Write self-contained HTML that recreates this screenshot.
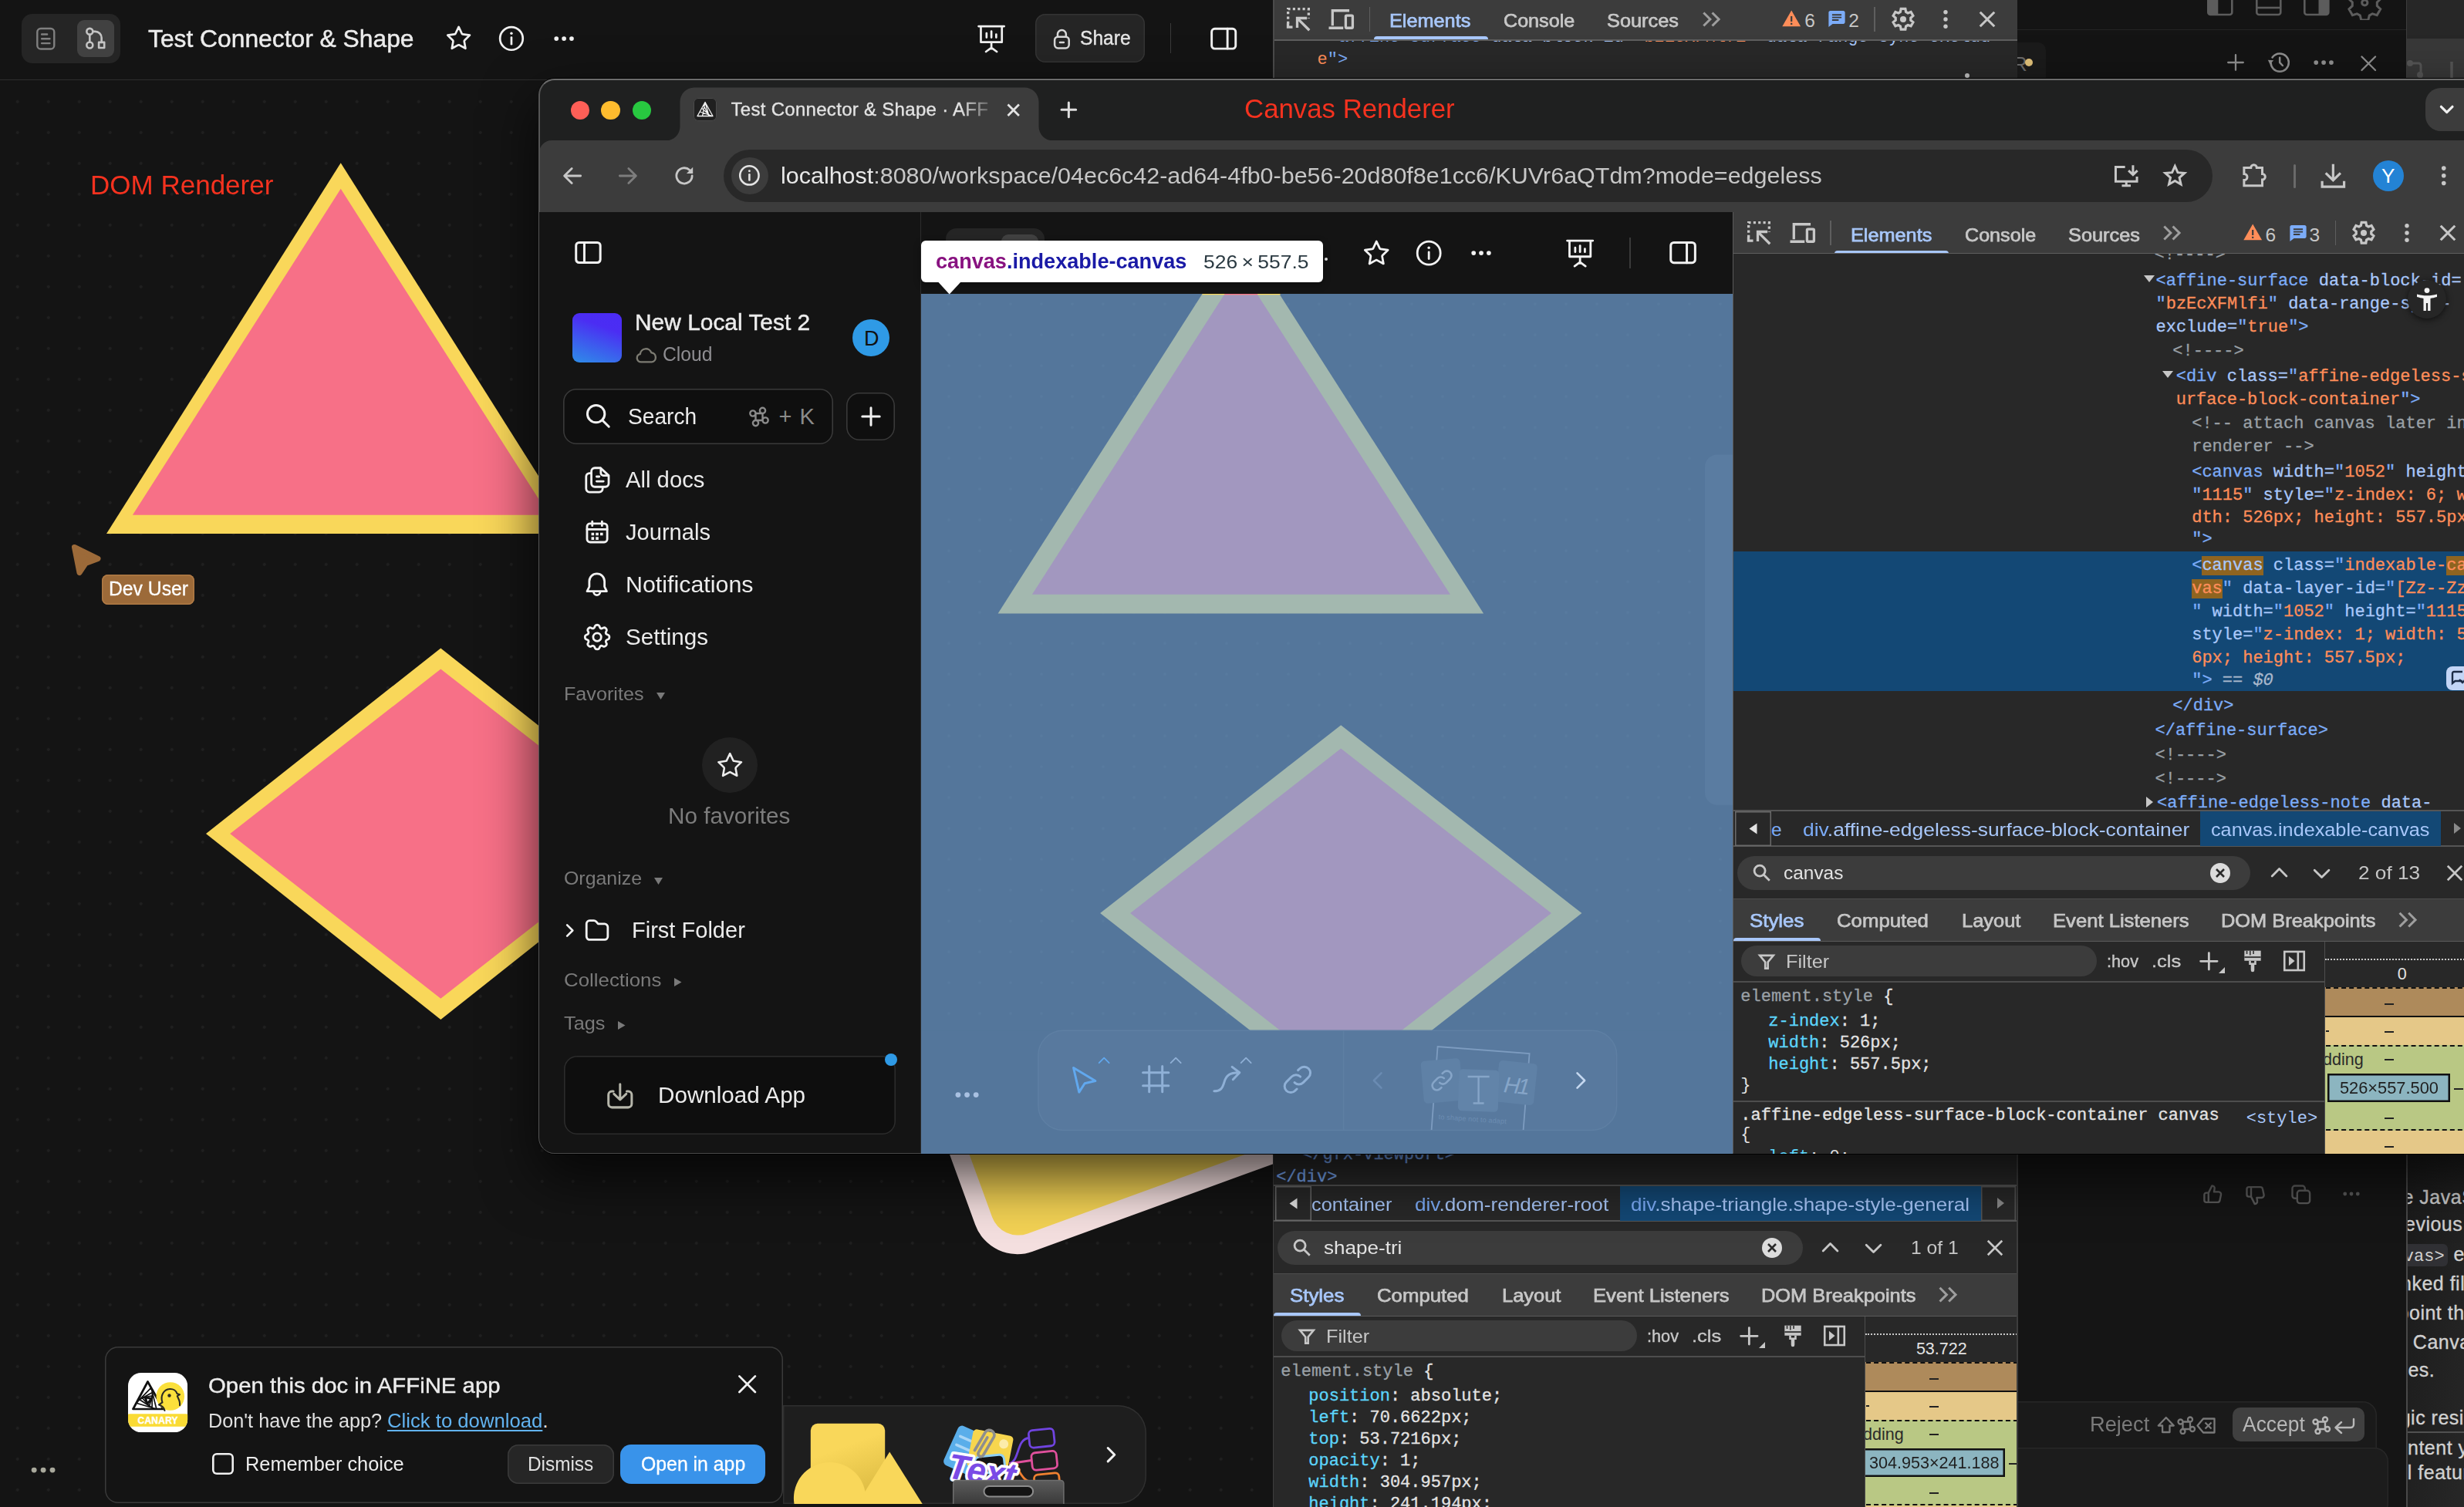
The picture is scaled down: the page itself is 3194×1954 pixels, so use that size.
<!DOCTYPE html>
<html><head><meta charset="utf-8"><title>Canvas vs DOM Renderer</title>
<style>
html,body{margin:0;padding:0;background:#141414;}
body{width:3194px;height:1954px;position:relative;overflow:hidden;font-family:"Liberation Sans",sans-serif;}
.b{position:absolute;box-sizing:border-box;display:block;}
.t{position:absolute;white-space:pre;}
svg text{white-space:pre;}
</style></head><body>
<div class="b" style="left:0px;top:103px;width:1651px;height:1851px;background-color:#141414;background-image:radial-gradient(circle,#202020 1.5px,rgba(32,32,32,0) 2.3px);background-size:40px 40px;background-position:2.7px -111.2px;"></div>
<svg class="b" style="left:0;top:103px" width="700" height="1400" viewBox="0 103 700 1400"><polygon points="441.7,211.3 138,692 745.4,692" fill="#f9d75a"/><polygon points="441.7,244.8 171.9,667.8 711.5,667.8" fill="#f77087"/><polygon points="571.3,840.4 267,1081 571.3,1322 875.6,1081" fill="#f9d75a"/><polygon points="571.3,867.4 298.2,1081 571.3,1294.7 844.4,1081" fill="#f77087"/></svg>
<div class="t" style="left:117px;top:222.2px;font:35px/35px 'Liberation Sans',sans-serif;color:#f5321f;transform:scaleX(1.0004);transform-origin:0 0;">DOM Renderer</div>
<svg class="b" style="left:88px;top:700px" width="48" height="50" viewBox="88 700 48 50"><path d="M96.5 709.5 L127 724.5 L111 730.5 L103 742.5 Z" fill="#9c6a39" stroke="#9c6a39" stroke-width="7" stroke-linejoin="round"/></svg>
<div class="b" style="left:132.4px;top:745.2px;width:119.3px;height:38.6px;background:#9c6a39;border-radius:8px;box-shadow:inset 0 0 0 1.5px #b07a45;"></div>
<div class="t" style="left:140.7px;top:750.7px;font:25.5px/25.5px 'Liberation Sans',sans-serif;color:#fff;transform:scaleX(0.9701);transform-origin:0 0;-webkit-text-stroke:0.3px;">Dev User</div>
<div class="b" style="left:0px;top:0px;width:1651px;height:103.5px;background:#141414;border-bottom:1.5px solid #2e2e2e;"></div>
<div class="b" style="left:28px;top:18px;width:128px;height:64px;background:#252525;border-radius:14px;"></div>
<div class="b" style="left:100px;top:26px;width:48px;height:48px;background:#414141;border-radius:9px;"></div>
<svg class="b" style="left:41.4px;top:31.7px;overflow:visible;" width="36.6" height="36.6" viewBox="0 0 24 24"><rect fill="none" stroke="#808080" stroke-width="1.572" stroke-linecap="round" stroke-linejoin="round" x="4.8" y="3.3" width="14.4" height="17.4" rx="3"/><path fill="none" stroke="#808080" stroke-width="1.572" stroke-linecap="round" stroke-linejoin="round" d="M8.6 8.2h4.6M8.6 12h6.8M8.6 15.8h6.8"/></svg>
<svg class="b" style="left:106.3px;top:32.3px;overflow:visible;" width="35.4" height="35.4" viewBox="0 0 24 24"><circle fill="none" stroke="#c4c4c4" stroke-width="1.764" stroke-linecap="round" stroke-linejoin="round" cx="7" cy="6" r="2.7"/><circle fill="none" stroke="#c4c4c4" stroke-width="1.764" stroke-linecap="round" stroke-linejoin="round" cx="7" cy="18" r="2.7"/><rect fill="none" stroke="#c4c4c4" stroke-width="1.764" stroke-linecap="round" stroke-linejoin="round" x="15" y="15.5" width="4.8" height="4.8"/><path fill="none" stroke="#c4c4c4" stroke-width="1.764" stroke-linecap="round" stroke-linejoin="round" d="M7 8.7v6.6M9.7 6h2.1a5.6 5.6 0 015.6 5.6v3.9"/></svg>
<div class="t" style="left:191.5px;top:34.7px;font:31px/31px 'Liberation Sans',sans-serif;color:#ececec;transform:scaleX(1.0252);transform-origin:0 0;-webkit-text-stroke:0.45px;">Test Connector &amp; Shape</div>
<svg class="b" style="left:575.4px;top:29.2px;overflow:visible;" width="39.2" height="39.2" viewBox="0 0 24 24"><path fill="none" stroke="#f0f0f0" stroke-width="1.655" stroke-linecap="round" stroke-linejoin="round" d="M12 3.6l2.5 5.3c.1.3.4.5.7.5l5.6.8-4.1 4c-.2.2-.3.6-.3.9l1 5.6-5-2.7c-.3-.1-.6-.1-.8 0l-5 2.7 1-5.6c0-.3-.1-.7-.3-.9l-4.1-4 5.6-.8c.3 0 .6-.2.7-.5z"/></svg>
<svg class="b" style="left:642.8px;top:30px;overflow:visible;" width="39.9" height="39.9" viewBox="0 0 24 24"><circle fill="none" stroke="#f0f0f0" stroke-width="1.623" stroke-linecap="round" stroke-linejoin="round" cx="12" cy="12" r="8.9"/><path fill="none" stroke="#f0f0f0" stroke-width="1.623" stroke-linecap="round" stroke-linejoin="round" d="M12 11.2v5.2"/><circle cx="12" cy="7.9" r="1.05" fill="#f0f0f0"/></svg>
<svg class="b" style="left:711.6px;top:30.9px;overflow:visible;" width="38.2" height="38.2" viewBox="0 0 24 24"><circle cx="5.8" cy="12" r="1.8" fill="#f0f0f0"/><circle cx="12" cy="12" r="1.8" fill="#f0f0f0"/><circle cx="18.2" cy="12" r="1.8" fill="#f0f0f0"/></svg>
<svg class="b" style="left:1263.4px;top:28.4px;overflow:visible;" width="44.2" height="44.2" viewBox="0 0 24 24"><path fill="none" stroke="#f0f0f0" stroke-width="1.466" stroke-linecap="round" stroke-linejoin="round" d="M3 3.3h18M4.6 3.3v11.2h14.8V3.3M12 14.5v4.6M12 18.4l-3.8 2.8M12 18.4l3.8 2.8M8.6 8.2v3M12 6.8v4.4M15.4 9v2.2"/></svg>
<div class="b" style="left:1342px;top:18px;width:142px;height:63px;background:#252525;border-radius:13px;box-shadow:inset 0 0 0 1.5px #343434;"></div>
<svg class="b" style="left:1359.6px;top:33.6px;overflow:visible;" width="32.8" height="32.8" viewBox="0 0 24 24"><rect fill="none" stroke="#d8d8d8" stroke-width="1.827" stroke-linecap="round" stroke-linejoin="round" x="5.2" y="10" width="13.6" height="10.8" rx="3.2"/><path fill="none" stroke="#d8d8d8" stroke-width="1.827" stroke-linecap="round" stroke-linejoin="round" d="M8 10V7.6a4 4 0 018 0V10M10.2 15.4h3.6"/></svg>
<div class="t" style="left:1400px;top:36.4px;font:26.5px/26.5px 'Liberation Sans',sans-serif;color:#e6e6e6;transform:scaleX(0.9276);transform-origin:0 0;-webkit-text-stroke:0.4px;">Share</div>
<div class="b" style="left:1516.5px;top:30px;width:1.5px;height:39px;background:#3a3a3a;"></div>
<svg class="b" style="left:1564.6px;top:28.6px;overflow:visible;" width="42.4" height="42.4" viewBox="0 0 24 24"><rect fill="none" stroke="#f0f0f0" stroke-width="1.64" stroke-linecap="round" stroke-linejoin="round" x="3.2" y="4.7" width="17.6" height="14.6" rx="2.2"/><path fill="none" stroke="#f0f0f0" stroke-width="1.64" stroke-linecap="round" stroke-linejoin="round" d="M14.8 4.7v14.6"/></svg>
<svg class="b" style="left:32.9px;top:1883.1px;overflow:visible;" width="46.2" height="46.2" viewBox="0 0 24 24"><circle cx="5.8" cy="12" r="1.8" fill="#a9a99c"/><circle cx="12" cy="12" r="1.8" fill="#a9a99c"/><circle cx="18.2" cy="12" r="1.8" fill="#a9a99c"/></svg>
<svg class="b" style="left:1200px;top:1490px" width="460" height="160" viewBox="1200 1490 460 160"><defs><linearGradient id="gy" x1="0" y1="0" x2="0" y2="1"><stop offset="0" stop-color="#f3d254"/><stop offset="1" stop-color="#f3d254"/></linearGradient></defs><g transform="rotate(-20 1284 1642.5)"><rect x="1284" y="1242.5" width="700" height="400" rx="58" fill="#f4dfdf"/><rect x="1308" y="1266.5" width="652" height="352" rx="36" fill="#f3d254"/></g></svg>
<div class="b" style="left:1014.5px;top:1822.3px;width:471.7px;height:128px;background:#1e1e1e;border-radius:0 36px 36px 0;box-shadow:inset 0 0 0 1.5px #2f2f2f;"></div>
<svg class="b" style="left:1020px;top:1830px" width="460" height="120" viewBox="1020 1830 460 120"><defs><linearGradient id="gsq" x1="0" y1="0" x2="0.300" y2="1"><stop offset="0.350" stop-color="#f9d75a"/><stop offset="1" stop-color="#d9b840"/></linearGradient><linearGradient id="gbx" x1="0" y1="0" x2="0" y2="1"><stop offset="0" stop-color="#5c5c5c"/><stop offset="1" stop-color="#2f2f2f"/></linearGradient></defs><rect x="1050.8" y="1845.8" width="96.4" height="120" rx="9" fill="url(#gsq)"/><circle cx="1075.6" cy="1942.6" r="46.7" fill="#f9d75a"/><polygon points="1153.2,1882.6 1111,1950.5 1196,1950.5" fill="#f9d75a"/><g transform="rotate(24 1250 1880)"><rect x="1231" y="1852" width="42" height="56" rx="6" fill="#5aaeea"/><path d="M1238 1866h26M1238 1878h26M1238 1890h20" stroke="#a9d6f7" stroke-width="3.5" stroke-linecap="round"/></g><g transform="rotate(11 1283 1882)"><rect x="1257" y="1857" width="53" height="50" rx="5" fill="#f7d64e"/><circle cx="1299" cy="1869" r="6" fill="#fcecaa"/></g><path d="M1308 1897.5c14-2 9-32 26-33M1308 1897.5l29-4M1308 1899c14 0 12 22 32 23" fill="none" stroke-width="2.8"/><path d="M1308 1897.5c14-2 9-32 26-33" fill="none" stroke="#7044e0" stroke-width="2.8"/><path d="M1310 1897.5l27-4" fill="none" stroke="#e0509c" stroke-width="2.8"/><path d="M1308 1899c16 0 12 22 32 23" fill="none" stroke="#f08030" stroke-width="2.8"/><rect x="1334" y="1853.5" width="32.5" height="22.5" rx="5" fill="#1e1e1e" stroke="#7044e0" stroke-width="2.8" transform="rotate(-6 1350 1865)"/><rect x="1337.5" y="1882.5" width="32.5" height="22.5" rx="5" fill="#1e1e1e" stroke="#e0509c" stroke-width="2.8" transform="rotate(-6 1354 1894)"/><rect x="1341" y="1911" width="32.5" height="22.5" rx="5" fill="#1e1e1e" stroke="#f08030" stroke-width="2.8" transform="rotate(-6 1357 1922)"/><rect x="1264" y="1887.5" width="38" height="22" rx="6" fill="#141414" stroke="#8fd0f5" stroke-width="3" transform="rotate(-6 1283 1897)"/><text x="1227" y="1916" transform="rotate(9 1227 1916)" font-family="Liberation Sans, sans-serif" font-style="italic" font-weight="bold" font-size="46" fill="#7a4be6" stroke="#fff" stroke-width="7" paint-order="stroke" stroke-linejoin="round" textLength="88" lengthAdjust="spacingAndGlyphs">Text</text><path d="M1263.5 1880.5l14-24a6.5 6.5 0 0111 6.5l-14 24a3.6 3.6 0 01-6.2-3.6l11.5-19.5" fill="none" stroke="#8e8e8e" stroke-width="3.6" stroke-linecap="round"/><rect x="1235.7" y="1919.4" width="143.2" height="40" rx="4" fill="url(#gbx)" stroke="#6e6e6e" stroke-width="1.5"/><rect x="1275.5" y="1927" width="63.6" height="13.4" rx="6.7" fill="#141414" stroke="#8c8c8c" stroke-width="2"/></svg>
<svg class="b" style="left:1423.8px;top:1869.8px;overflow:visible;" width="32.4" height="32.4" viewBox="0 0 24 24"><path fill="none" stroke="#f0f0f0" stroke-width="2.222" stroke-linecap="round" stroke-linejoin="round" d="M9 5.6l6.4 6.4-6.4 6.4"/></svg>
<div class="b" style="left:136px;top:1746px;width:878.5px;height:203px;background:#141414;border-radius:17px;box-shadow:inset 0 0 0 1.5px #3a3a3a;"></div>
<svg class="b" style="left:166.4px;top:1780.4px" width="77.2" height="77.2" viewBox="0 0 77.2 77.2"><defs><clipPath id="cpi"><rect x="0" y="0" width="77.2" height="77.2" rx="17"/></clipPath></defs><g clip-path="url(#cpi)"><rect width="77.2" height="77.2" fill="#fff"/><rect x="-1" y="53.2" width="79.2" height="16.6" rx="3" fill="#fadb35"/><path d="M25.5 11.5L45.5 47L6.5 47ZM29.9 19.3L36.9 47L10.7 39.2ZM31.4 25.4L31.1 45.3L14.9 34.8ZM31.4 29.8L27.6 43L18.5 32.7ZM30.5 32.7L25.6 40.7L21.4 32.1ZM29.5 34.5L24.7 38.8L23.4 32.2Z" fill="none" stroke="#111" stroke-width="1.7" stroke-linejoin="round"/><path d="M25.5 11.5L45.5 47H6.5z" fill="none" stroke="#111" stroke-width="2.7" stroke-linejoin="round"/><circle cx="54.8" cy="30.5" r="18.3" fill="#fbe03c"/><path d="M44.5 38.5c-3-8.5 1.5-17 9.5-17.5 5-.300 8.5 2.5 9.5 6l3.5 1.2-3.2 2c1.5 3.5 4 6.5 3.2 12M44.5 38.5l-4.5 3c3.5 1 6.5 3.5 7.5 7.5" fill="none" stroke="#2b2a22" stroke-width="2.1" stroke-linecap="round" stroke-linejoin="round"/><circle cx="53.5" cy="29.5" r="2.2" fill="#2b2a22"/><text x="38.6" y="66.3" text-anchor="middle" font-family="Liberation Sans, sans-serif" font-weight="bold" font-size="12" fill="#fff" textLength="52" stroke="#fff" stroke-width=".4">CANARY</text></g></svg>
<div class="t" style="left:269.9px;top:1782.3px;font:28.5px/28.5px 'Liberation Sans',sans-serif;color:#ececec;transform:scaleX(1.0301);transform-origin:0 0;-webkit-text-stroke:0.4px;">Open this doc in AFFiNE app</div>
<div class="t" style="left:269.9px;top:1829px;font:26.5px/26.5px 'Liberation Sans',sans-serif;color:#e0e0e0;transform:scaleX(0.9522);transform-origin:0 0;">Don't have the app? </div>
<div class="t" style="left:502px;top:1829px;font:26.5px/26.5px 'Liberation Sans',sans-serif;color:#62b3f0;transform:scaleX(0.9692);transform-origin:0 0;text-decoration:underline;text-decoration-thickness:2px;text-underline-offset:3px;">Click to download</div>
<div class="t" style="left:703.3px;top:1829px;font:26.5px/26.5px 'Liberation Sans',sans-serif;color:#e0e0e0;">.</div>
<svg class="b" style="left:952.2px;top:1778px;overflow:visible;" width="33.3" height="33.3" viewBox="0 0 24 24"><path fill="none" stroke="#f0f0f0" stroke-width="2.018" stroke-linecap="round" stroke-linejoin="round" d="M4.6 4.6l14.8 14.8M19.4 4.6L4.6 19.4"/></svg>
<div class="b" style="left:274.8px;top:1883.8px;width:28.4px;height:28.5px;border-radius:6px;box-shadow:inset 0 0 0 2.6px #f0f0f0;"></div>
<div class="t" style="left:317.8px;top:1885px;font:26.5px/26.5px 'Liberation Sans',sans-serif;color:#ececec;transform:scaleX(0.9566);transform-origin:0 0;">Remember choice</div>
<div class="b" style="left:657.5px;top:1872.5px;width:138px;height:51px;background:#262626;border-radius:14px;box-shadow:inset 0 0 0 1.5px #3a3a3a;"></div>
<div class="t" style="left:683.8px;top:1885px;font:26.5px/26.5px 'Liberation Sans',sans-serif;color:#e0e0e0;transform:scaleX(0.9187);transform-origin:0 0;">Dismiss</div>
<div class="b" style="left:804.4px;top:1872.5px;width:188px;height:51px;background:#3993ea;border-radius:14px;"></div>
<div class="t" style="left:830.8px;top:1885px;font:26.5px/26.5px 'Liberation Sans',sans-serif;color:#fff;transform:scaleX(0.9363);transform-origin:0 0;-webkit-text-stroke:0.3px;">Open in app</div>
<div class="b" style="left:1650px;top:0px;width:965px;height:102px;background:#282828;"></div>
<div class="b" style="left:1652px;top:51px;width:963px;height:51px;overflow:hidden">
<div class="t" style="left:70px;top:-13px;font:22px/22px 'Liberation Mono',monospace;color:#a8c7fa;"><span style="color:#7cacf8">&lt;affine-surface</span> data-block-id=<span style="color:#fe8d59">"bzEcXFMlfi"</span> data-range-sync-exclud</div>
</div>
<div class="t" style="left:1707.5px;top:66.5px;font:22px/22px 'Liberation Mono',monospace;color:#7cacf8;"><span style="color:#fe8d59">e</span>"&gt;</div>
<div class="b" style="left:1650px;top:0px;width:965px;height:51px;background:#3c3c3c;"></div>
<svg class="b" style="left:1664.7px;top:6.5px;overflow:visible;" width="36" height="36" viewBox="0 0 24 24"><path fill="none" stroke="#c7c7c7" stroke-width="2.2" stroke-linecap="butt" stroke-linejoin="miter" stroke-dasharray="2.1 2.15" d="M3.1 16V3.1h17.8v8"/><path fill="none" stroke="#c7c7c7" stroke-width="2.2" stroke-linecap="butt" stroke-linejoin="miter" d="M3 15.5v3.3h4"/><path fill="none" stroke="#c7c7c7" stroke-width="2.2" stroke-linecap="butt" stroke-linejoin="miter" d="M21.5 21.5L11.4 11.4M11 19.4V11h8.4"/></svg>
<svg class="b" style="left:1721.2px;top:6.5px;overflow:visible;" width="36" height="36" viewBox="0 0 24 24"><path fill="none" stroke="#c7c7c7" stroke-width="2.2" stroke-linecap="butt" stroke-linejoin="miter" d="M4.2 17.5V4.5h14.5M1 19.5h12.5"/><rect fill="none" stroke="#c7c7c7" stroke-width="2.2" stroke-linecap="butt" stroke-linejoin="miter" x="15.6" y="8.8" width="6" height="10.7" rx=".8"/></svg>
<div class="b" style="left:1774.7px;top:8.5px;width:1.6px;height:32px;background:#5e5e5e;"></div>
<div class="t" style="left:1801.4px;top:15.2px;font:24.5px/24.5px 'Liberation Sans',sans-serif;color:#a8c7fa;transform:scaleX(1.031);transform-origin:0 0;-webkit-text-stroke:0.75px;">Elements</div>
<div class="t" style="left:1949.3px;top:15.2px;font:24.5px/24.5px 'Liberation Sans',sans-serif;color:#c7c7c7;transform:scaleX(1.0257);transform-origin:0 0;-webkit-text-stroke:0.75px;">Console</div>
<div class="t" style="left:2083.3px;top:15.2px;font:24.5px/24.5px 'Liberation Sans',sans-serif;color:#c7c7c7;transform:scaleX(1.0336);transform-origin:0 0;-webkit-text-stroke:0.75px;">Sources</div>
<svg class="b" style="left:2202.7px;top:8.5px;overflow:visible;" width="32" height="32" viewBox="0 0 24 24"><path fill="none" stroke="#9e9e9e" stroke-width="2.25" stroke-linecap="butt" stroke-linejoin="miter" d="M4 5.6l6.4 6.4L4 18.4M12.4 5.6l6.4 6.4-6.4 6.4"/></svg>
<svg class="b" style="left:2309.4px;top:10.8px;overflow:visible;" width="26.4" height="26.4" viewBox="0 0 24 24"><path d="M12 2.2L1.2 21.2h21.6z" fill="#fe8d59"/><path d="M11 9h2v6.4h-2zM11 17h2v2.2h-2z" fill="#3c3c3c"/></svg>
<div class="t" style="left:2339.2px;top:15.2px;font:24.5px/24.5px 'Liberation Sans',sans-serif;color:#c7c7c7;">6</div>
<svg class="b" style="left:2368.3px;top:11px;overflow:visible;" width="26" height="26" viewBox="0 0 24 24"><path d="M4.2 2.8h15.6c1.1 0 2 .900 2 2v11.6c0 1.1-.900 2-2 2H7l-4.8 3.8V4.8c0-1.1.900-2 2-2z" fill="#7cacf8"/><path d="M6.4 6.8h11.2v1.7H6.4zM6.4 9.9h11.2v1.7H6.4zM6.4 13h7.8v1.7H6.4z" fill="#3c3c3c"/></svg>
<div class="t" style="left:2396.2px;top:15.2px;font:24.5px/24.5px 'Liberation Sans',sans-serif;color:#c7c7c7;">2</div>
<div class="b" style="left:2429.2px;top:8.5px;width:1.6px;height:32px;background:#5e5e5e;"></div>
<svg class="b" style="left:2448.7px;top:6.5px;overflow:visible;" width="36" height="36" viewBox="0 0 24 24"><path fill="none" stroke="#c7c7c7" stroke-width="2.133" stroke-linecap="butt" stroke-linejoin="miter" stroke-linejoin="round" d="M10.1 2.9h3.8l.5 2.7 1.7 1 2.6-.9 1.9 3.3-2.1 1.8v2l2.1 1.8-1.9 3.3-2.6-.9-1.7 1-.5 2.7h-3.8l-.5-2.7-1.7-1-2.6.9-1.9-3.3 2.1-1.8v-2L3.4 9l1.9-3.3 2.6.9 1.7-1z"/><circle cx="12" cy="12" r="2.7" fill="#c7c7c7"/></svg>
<svg class="b" style="left:2504.4px;top:6.5px;overflow:visible;" width="36" height="36" viewBox="0 0 24 24"><circle cy="5.8" cx="12" r="1.8" fill="#c7c7c7"/><circle cx="12" cy="12" r="1.8" fill="#c7c7c7"/><circle cy="18.2" cx="12" r="1.8" fill="#c7c7c7"/></svg>
<svg class="b" style="left:2561.2px;top:9.5px;overflow:visible;" width="30" height="30" viewBox="0 0 24 24"><path fill="none" stroke="#c7c7c7" stroke-width="2.48" stroke-linecap="butt" stroke-linejoin="miter" d="M4.6 4.6l14.8 14.8M19.4 4.6L4.6 19.4"/></svg>
<div class="b" style="left:1780.7px;top:47px;width:148px;height:4px;background:#a8c7fa;border-radius:4px 4px 0 0;"></div>
<div class="b" style="left:1650px;top:51px;width:965px;height:1.6px;background:#5e5e5e;"></div>
<div class="b" style="left:1650px;top:0px;width:2px;height:102px;background:#4a4a4a;"></div>
<div class="b" style="left:2546.7px;top:94.5px;width:6px;height:6px;background:#c0c0c0;border-radius:3px;"></div>
<div class="b" style="left:2615px;top:0px;width:579px;height:102px;background:#141414;"></div>
<div class="b" style="left:2615px;top:37.5px;width:504px;height:1.5px;background:#242424;"></div>
<div class="b" style="left:2615px;top:55px;width:37px;height:47px;background:#1b1b1b;border-radius:0 10px 0 0;"></div>
<div class="b" style="left:2615px;top:55px;width:40px;height:47px;overflow:hidden">
<div class="t" style="left:-6px;top:15px;font:26px/26px 'Liberation Sans',sans-serif;color:#6a6a6a;">R</div>
</div>
<div class="b" style="left:2625px;top:76px;width:10px;height:10px;background:#e2c27a;border-radius:5px;"></div>
<div class="b" style="left:3119px;top:0px;width:75px;height:50px;background:#272727;"></div>
<div class="b" style="left:3119px;top:50px;width:75px;height:52px;background:#383838;"></div>
<div class="b" style="left:3118.5px;top:0px;width:1.5px;height:102px;background:#3d3d3d;"></div>
<svg class="b" style="left:2855px;top:0" width="240" height="26" viewBox="2855 0 240 26"><g fill="none" stroke="#5c5c5c" stroke-width="2.6"><rect x="2862.3" y="-8" width="31" height="27" rx="3"/><rect x="2925.3" y="-8" width="31" height="27" rx="3"/><rect x="2987.3" y="-8" width="31" height="27" rx="3"/><path d="M2925.3 10h31"/></g><path d="M2862.3 -8h13v27h-10a3 3 0 01-3-3z M3005.5 -8h13v24a3 3 0 01-3 3h-10z" fill="#5c5c5c"/><g transform="translate(3065.3 3.5)" fill="none" stroke="#5c5c5c" stroke-width="3" stroke-linejoin="miter"><path d="M-4.5 -19h9l1.5 6 4 2.3 5.9-1.8 4.5 7.8-4.4 4.2v4.6l4.4 4.2-4.5 7.8-5.9-1.8-4 2.3-1.5 6h-9l-1.5-6-4-2.3-5.9 1.8-4.5-7.8 4.4-4.2v-4.6l-4.4-4.2 4.5-7.8 5.9 1.8 4-2.3z"/><circle cx="0" cy="0" r="3.6"/></g></svg>
<svg class="b" style="left:2883.5px;top:67px;overflow:visible;" width="28" height="28" viewBox="0 0 24 24"><path fill="none" stroke="#8f8f8f" stroke-width="1.971" stroke-linecap="round" stroke-linejoin="round" d="M12 3.6v16.8M3.6 12h16.8"/></svg>
<svg class="b" style="left:2937.4px;top:63.9px;overflow:visible;" width="34.1" height="34.1" viewBox="0 0 24 24"><path fill="none" stroke="#8f8f8f" stroke-width="1.759" stroke-linecap="round" stroke-linejoin="round" d="M4.6 12a8.2 8.2 0 108.2-8.2A8.2 8.2 0 006 7.4"/><path fill="none" stroke="#8f8f8f" stroke-width="1.759" stroke-linecap="round" stroke-linejoin="round" d="M12.8 7.6V12l2.6 2.8"/><path d="M2 9.6l5.2.4-3.4 3.6z" fill="#8f8f8f"/></svg>
<svg class="b" style="left:2993.1px;top:62.1px;overflow:visible;" width="38.2" height="38.2" viewBox="0 0 24 24"><circle cx="5.8" cy="12" r="1.8" fill="#8f8f8f"/><circle cx="12" cy="12" r="1.8" fill="#8f8f8f"/><circle cx="18.2" cy="12" r="1.8" fill="#8f8f8f"/></svg>
<svg class="b" style="left:3055.8px;top:67.8px;overflow:visible;" width="28.5" height="28.5" viewBox="0 0 24 24"><path fill="none" stroke="#8f8f8f" stroke-width="1.937" stroke-linecap="round" stroke-linejoin="round" d="M4.6 4.6l14.8 14.8M19.4 4.6L4.6 19.4"/></svg>
<svg class="b" style="left:3120px;top:76px" width="74" height="26" viewBox="3120 76 74 26"><path d="M3121 82h14a3 3 0 013 3v17" fill="none" stroke="#555" stroke-width="3"/><circle cx="3124" cy="82" r="4" fill="#555"/><circle cx="3137" cy="97" r="4" fill="#555"/><path d="M3178 80v22" stroke="#555" stroke-width="3.5"/></svg>
<div class="b" style="left:2616px;top:1495px;width:578px;height:459px;background:#151515;"></div>
<div class="b" style="left:3119.5px;top:1495px;width:75px;height:459px;background:linear-gradient(100deg,#1a1a1a,#272727);"></div>
<div class="b" style="left:3118.8px;top:1495px;width:2px;height:459px;background:#484848;"></div>
<svg class="b" style="left:2853.1px;top:1533px;overflow:visible;" width="30.9" height="30.9" viewBox="0 0 24 24"><path fill="none" stroke="#5b5b5b" stroke-width="1.861" stroke-linecap="round" stroke-linejoin="round" d="M7.6 10.6l3.6-7.2c1.6 0 2.8 1.4 2.5 3l-.5 3.2h4.7c1.5 0 2.6 1.4 2.3 2.8l-1.2 5.8c-.2 1.1-1.2 1.9-2.3 1.9H7.6M7.6 10.6v9.5M7.6 10.6H5.4a2 2 0 00-2 2v5.5a2 2 0 002 2h2.2"/></svg>
<svg class="b" style="left:2907.5px;top:1533.7px;overflow:visible;transform:rotate(180deg) scaleX(-1);" width="31.6" height="31.6" viewBox="0 0 24 24"><path fill="none" stroke="#5b5b5b" stroke-width="1.824" stroke-linecap="round" stroke-linejoin="round" d="M7.6 10.6l3.6-7.2c1.6 0 2.8 1.4 2.5 3l-.5 3.2h4.7c1.5 0 2.6 1.4 2.3 2.8l-1.2 5.8c-.2 1.1-1.2 1.9-2.3 1.9H7.6M7.6 10.6v9.5M7.6 10.6H5.4a2 2 0 00-2 2v5.5a2 2 0 002 2h2.2"/></svg>
<svg class="b" style="left:2967.2px;top:1532.7px;overflow:visible;" width="31.6" height="31.6" viewBox="0 0 24 24"><rect fill="none" stroke="#5b5b5b" stroke-width="1.824" stroke-linecap="round" stroke-linejoin="round" x="8.2" y="8.2" width="12.4" height="12.4" rx="2.6"/><path fill="none" stroke="#5b5b5b" stroke-width="1.824" stroke-linecap="round" stroke-linejoin="round" d="M15.8 8V6a2.6 2.6 0 00-2.6-2.6H6A2.6 2.6 0 003.4 6v7.2A2.6 2.6 0 006 15.8h2"/></svg>
<svg class="b" style="left:3032.4px;top:1532.2px;overflow:visible;" width="32" height="32" viewBox="0 0 24 24"><circle cx="5.8" cy="12" r="1.8" fill="#5b5b5b"/><circle cx="12" cy="12" r="1.8" fill="#5b5b5b"/><circle cx="18.2" cy="12" r="1.8" fill="#5b5b5b"/></svg>
<div class="b" style="left:2596px;top:1816.5px;width:485px;height:90px;background:#1a1a1a;border-radius:18px;box-shadow:inset 0 0 0 1.5px #262626;"></div>
<div class="t" style="left:2709px;top:1833.8px;font:27px/27px 'Liberation Sans',sans-serif;color:#7a7a7a;transform:scaleX(1.0087);transform-origin:0 0;">Reject</div>
<svg class="b" style="left:2796px;top:1836px" width="78" height="24" viewBox="2796 1836 78 24" fill="none" stroke="#7a7a7a" stroke-width="2.3" stroke-linejoin="round"><path d="M2807.8 1838l10 10.5h-5.3v8.5h-9.4v-8.5h-5.3z"/><path d="M2829.5 1843.5h9.5v9.5h-9.5zM2829.5 1843.5a3 3 0 11-3-3 3 3 0 013 3zM2839 1843.5a3 3 0 113 -3 3 3 0 01-3 3zM2839 1853a3 3 0 113 3 3 3 0 01-3-3zM2829.5 1853a3 3 0 11-3 3 3 3 0 013-3z"/><path d="M2856 1839.5h14.5v18H2856l-7.5-9zM2858.5 1844.5l8 8M2866.5 1844.5l-8 8"/></svg>
<div class="b" style="left:2894px;top:1825px;width:170.8px;height:44px;background:#404040;border-radius:10px;"></div>
<div class="t" style="left:2907.2px;top:1833.8px;font:27px/27px 'Liberation Sans',sans-serif;color:#b8b8b8;transform:scaleX(0.9789);transform-origin:0 0;">Accept</div>
<svg class="b" style="left:2996px;top:1836px" width="60" height="24" viewBox="2996 1836 60 24" fill="none" stroke="#b8b8b8" stroke-width="2.4" stroke-linejoin="round"><path d="M3004.5 1843.5h9.5v9.5h-9.5zM3004.5 1843.5a3 3 0 11-3-3 3 3 0 013 3zM3014 1843.5a3 3 0 113 -3 3 3 0 01-3 3zM3014 1853a3 3 0 113 3 3 3 0 01-3-3zM3004.5 1853a3 3 0 11-3 3 3 3 0 013-3z"/><path d="M3051 1840v7a4 4 0 01-4 4h-19M3035 1844l-7.5 7 7.5 7" stroke-linecap="round"/></svg>
<div class="b" style="left:2596px;top:1877px;width:499.5px;height:90px;background:#1c1c1c;border-radius:18px;box-shadow:inset 0 0 0 1.5px #272727;"></div>
<div class="b" style="left:3120.5px;top:1495px;width:74px;height:459px;overflow:hidden"><div class="b" style="left:-3120.5px;top:-1495px;width:3194px;height:1954px">
<div class="b" style="left:3119px;top:1613px;width:53.5px;height:28.5px;background:#303034;border-radius:0 6px 6px 0;"></div>
<div class="t" style="left:3114.5px;top:1539.9px;font:25px/25px 'Liberation Sans',sans-serif;color:#d0d0d0;letter-spacing:0.5px;-webkit-text-stroke:0.35px;">e JavaScript</div>
<div class="t" style="left:3117px;top:1575.4px;font:25px/25px 'Liberation Sans',sans-serif;color:#d0d0d0;letter-spacing:0.5px;-webkit-text-stroke:0.35px;">evious state</div>
<div class="t" style="left:3112px;top:1651.5px;font:25px/25px 'Liberation Sans',sans-serif;color:#d0d0d0;letter-spacing:0.5px;-webkit-text-stroke:0.35px;">nked files</div>
<div class="t" style="left:3108.6px;top:1689.9px;font:25px/25px 'Liberation Sans',sans-serif;color:#d0d0d0;letter-spacing:0.5px;-webkit-text-stroke:0.35px;">point the</div>
<div class="t" style="left:3120.4px;top:1728.1px;font:25px/25px 'Liberation Sans',sans-serif;color:#d0d0d0;letter-spacing:0.5px;-webkit-text-stroke:0.35px;"> Canvas</div>
<div class="t" style="left:3121.4px;top:1764.2px;font:25px/25px 'Liberation Sans',sans-serif;color:#d0d0d0;letter-spacing:0.5px;-webkit-text-stroke:0.35px;">es.</div>
<div class="t" style="left:3110.7px;top:1826px;font:25px/25px 'Liberation Sans',sans-serif;color:#d0d0d0;letter-spacing:0.5px;-webkit-text-stroke:0.35px;">gic resides</div>
<div class="t" style="left:3121px;top:1865.3px;font:25px/25px 'Liberation Sans',sans-serif;color:#d0d0d0;letter-spacing:0.5px;-webkit-text-stroke:0.35px;">ntent you</div>
<div class="t" style="left:3120.8px;top:1896.5px;font:25px/25px 'Liberation Sans',sans-serif;color:#d0d0d0;letter-spacing:0.5px;-webkit-text-stroke:0.35px;">l features</div>
<div class="t" style="left:3115.8px;top:1618.5px;font:22px/22px 'Liberation Mono',monospace;color:#d0d0d0;">vas&gt;</div>
<div class="t" style="left:3180.5px;top:1613.5px;font:25px/25px 'Liberation Sans',sans-serif;color:#d0d0d0;-webkit-text-stroke:0.35px;">e</div>
<div class="b" style="left:3120px;top:1856.2px;width:75px;height:2px;background:#505050;"></div>
</div></div>
<div class="b" style="left:1651px;top:1495px;width:964px;height:459px;background:#282828;"></div>
<div class="b" style="left:1649.5px;top:1495px;width:1.5px;height:459px;background:#3d3d3d;"></div>
<div class="t" style="left:1688px;top:1487px;font:22px/22px 'Liberation Mono',monospace;color:#7cacf8;-webkit-text-stroke:0.3px;"><span style="color:#7cacf8">&lt;/gfx-viewport&gt;</span></div>
<div class="t" style="left:1654.2px;top:1516px;font:22px/22px 'Liberation Mono',monospace;color:#7cacf8;-webkit-text-stroke:0.3px;"><span style="color:#7cacf8">&lt;/div&gt;</span></div>
<div class="b" style="left:1651px;top:1536.2px;width:964px;height:48px;background:#282828;border-top:2px solid #555;border-bottom:2px solid #555;box-sizing:border-box;"></div>
<div class="b" style="left:2099.8px;top:1538px;width:468.4px;height:44.5px;background:#134875;"></div>
<div class="b" style="left:1652.5px;top:1538px;width:47px;height:44.5px;background:#282828;box-shadow:inset 0 0 0 1.5px #6a6a6a;"></div>
<svg class="b" style="left:1670.5px;top:1552.5px" width="11" height="15" viewBox="0 0 11 15"><path d="M10.5 0.5v14L0.5 7.5z" fill="#e3e3e3"/></svg>
<div class="t" style="left:1700px;top:1550.2px;font:24.5px/24.5px 'Liberation Sans',sans-serif;color:#a8c7fa;transform:scaleX(1.0358);transform-origin:0 0;"><span style="color:#a8c7fa">container</span></div>
<div class="t" style="left:1834px;top:1550.2px;font:24.5px/24.5px 'Liberation Sans',sans-serif;color:#a8c7fa;transform:scaleX(1.0684);transform-origin:0 0;"><span style="color:#7cacf8">div</span><span style="color:#a8c7fa">.dom-renderer-root</span></div>
<div class="t" style="left:2114px;top:1550.2px;font:24.5px/24.5px 'Liberation Sans',sans-serif;color:#a8c7fa;transform:scaleX(1.0617);transform-origin:0 0;"><span style="color:#7cacf8">div</span><span style="color:#a8c7fa">.shape-triangle.shape-style-general</span></div>
<div class="b" style="left:1651px;top:1584px;width:964px;height:68px;background:#282828;"></div>
<div class="b" style="left:1656.4px;top:1596px;width:680.4px;height:43.5px;background:#3c3c3c;border-radius:22px;"></div>
<svg class="b" style="left:1674.4px;top:1604.2px;overflow:visible;" width="27.2" height="27.2" viewBox="0 0 24 24"><circle fill="none" stroke="#c7c7c7" stroke-width="2.474" stroke-linecap="butt" stroke-linejoin="miter" cx="9.8" cy="9.8" r="6.2"/><path fill="none" stroke="#c7c7c7" stroke-width="2.474" stroke-linecap="butt" stroke-linejoin="miter" d="M14.4 14.4l6.6 6.6"/></svg>
<div class="t" style="left:1716.4px;top:1606.4px;font:24.5px/24.5px 'Liberation Sans',sans-serif;color:#e3e3e3;transform:scaleX(1.0637);transform-origin:0 0;">shape-tri</div>
<svg class="b" style="left:2283.7px;top:1604.8px" width="26" height="26" viewBox="0 0 26 26"><circle cx="13" cy="13" r="13" fill="#dcdcdc"/><path d="M8 8l10 10M18 8L8 18" stroke="#2a2a2a" stroke-width="2.6"/></svg>
<svg class="b" style="left:2355.1px;top:1599.9px;overflow:visible;" width="35.1" height="35.1" viewBox="0 0 24 24"><path fill="none" stroke="#c7c7c7" stroke-width="1.912" stroke-linecap="round" stroke-linejoin="round" d="M5.6 15l6.4-6.4 6.4 6.4"/></svg>
<svg class="b" style="left:2411.1px;top:1600.9px;overflow:visible;" width="35.1" height="35.1" viewBox="0 0 24 24"><path fill="none" stroke="#c7c7c7" stroke-width="1.912" stroke-linecap="round" stroke-linejoin="round" d="M5.6 9l6.4 6.4L18.4 9"/></svg>
<div class="t" style="left:2477.3px;top:1606.4px;font:24.5px/24.5px 'Liberation Sans',sans-serif;color:#c7c7c7;transform:scaleX(1.0066);transform-origin:0 0;">1 of 1</div>
<svg class="b" style="left:2571.3px;top:1603px;overflow:visible;" width="30" height="30" viewBox="0 0 24 24"><path fill="none" stroke="#c7c7c7" stroke-width="2.08" stroke-linecap="butt" stroke-linejoin="miter" d="M4.6 4.6l14.8 14.8M19.4 4.6L4.6 19.4"/></svg>
<div class="b" style="left:1651px;top:1651px;width:964px;height:55.5px;background:#3c3c3c;border-top:1.5px solid #4d4d4d;border-bottom:1.5px solid #5a5a5a;box-sizing:border-box;"></div>
<div class="t" style="left:1672.3px;top:1668px;font:24.5px/24.5px 'Liberation Sans',sans-serif;color:#a8c7fa;transform:scaleX(1.0552);transform-origin:0 0;-webkit-text-stroke:0.75px;">Styles</div>
<div class="t" style="left:1784.5px;top:1668px;font:24.5px/24.5px 'Liberation Sans',sans-serif;color:#c7c7c7;transform:scaleX(1.0518);transform-origin:0 0;-webkit-text-stroke:0.75px;">Computed</div>
<div class="t" style="left:1947px;top:1668px;font:24.5px/24.5px 'Liberation Sans',sans-serif;color:#c7c7c7;transform:scaleX(1.0386);transform-origin:0 0;-webkit-text-stroke:0.75px;">Layout</div>
<div class="t" style="left:2064.8px;top:1668px;font:24.5px/24.5px 'Liberation Sans',sans-serif;color:#c7c7c7;transform:scaleX(1.0458);transform-origin:0 0;-webkit-text-stroke:0.75px;">Event Listeners</div>
<div class="t" style="left:2282.8px;top:1668px;font:24.5px/24.5px 'Liberation Sans',sans-serif;color:#c7c7c7;transform:scaleX(1.037);transform-origin:0 0;-webkit-text-stroke:0.75px;">DOM Breakpoints</div>
<svg class="b" style="left:2508.8px;top:1662.3px;overflow:visible;" width="33.3" height="33.3" viewBox="0 0 24 24"><path fill="none" stroke="#9e9e9e" stroke-width="2.16" stroke-linecap="butt" stroke-linejoin="miter" d="M4 5.6l6.4 6.4L4 18.4M12.4 5.6l6.4 6.4-6.4 6.4"/></svg>
<div class="b" style="left:1651px;top:1701.5px;width:113px;height:4.5px;background:#a8c7fa;border-radius:4px 4px 0 0;"></div>
<div class="b" style="left:1651px;top:1706.5px;width:765.5px;height:900px;background:#282828;"></div>
<div class="b" style="left:1661.4px;top:1712px;width:460.6px;height:40px;background:#3c3c3c;border-radius:20px;"></div>
<svg class="b" style="left:1681.4px;top:1719.6px;overflow:visible;" width="25.9" height="25.9" viewBox="0 0 24 24"><path fill="none" stroke="#c7c7c7" stroke-width="2.412" stroke-linecap="butt" stroke-linejoin="miter" stroke-linejoin="round" d="M3.8 4.5h16.4L13.6 12.5V20h-3.2v-7.5z"/></svg>
<div class="t" style="left:1718.7px;top:1721px;font:24.5px/24.5px 'Liberation Sans',sans-serif;color:#c7c7c7;transform:scaleX(1.0322);transform-origin:0 0;">Filter</div>
<div class="t" style="left:2134.5px;top:1722px;font:22.5px/22.5px 'Liberation Sans',sans-serif;color:#c7c7c7;transform:scaleX(0.9641);transform-origin:0 0;-webkit-text-stroke:0.4px;">:hov</div>
<div class="t" style="left:2193px;top:1722px;font:22.5px/22.5px 'Liberation Sans',sans-serif;color:#c7c7c7;transform:scaleX(1.1348);transform-origin:0 0;-webkit-text-stroke:0.4px;">.cls</div>
<svg class="b" style="left:2252.2px;top:1716.7px;overflow:visible;" width="30.7" height="30.7" viewBox="0 0 24 24"><path fill="none" stroke="#c7c7c7" stroke-width="2.191" stroke-linecap="round" stroke-linejoin="round" d="M12 3.6v16.8M3.6 12h16.8"/></svg>
<svg class="b" style="left:2279.5px;top:1740px" width="8" height="8" viewBox="0 0 8 8"><path d="M8 0v8H0z" fill="#c7c7c7"/></svg>
<svg class="b" style="left:2308px;top:1716px;overflow:visible;" width="32" height="32" viewBox="0 0 24 24"><path d="M4 2h16v9.8H4z" fill="#c7c7c7"/><path d="M6.4 2v3.2M9.6 2v4.4M12.8 2v3.2" stroke="#3c3c3c" stroke-width="1.3"/><path d="M4 8.3h16" stroke="#3c3c3c" stroke-width="1.5"/><path fill="none" stroke="#c7c7c7" stroke-width="1.95" stroke-linecap="butt" stroke-linejoin="miter" stroke-linejoin="round" d="M9.4 11.8v3h5.2v-3"/><path d="M10.3 14.8h3.4v6.2a1.7 1.7 0 01-3.4 0z" fill="#c7c7c7"/></svg>
<svg class="b" style="left:2361.2px;top:1715px;overflow:visible;" width="34" height="34" viewBox="0 0 24 24"><rect fill="none" stroke="#c7c7c7" stroke-width="1.837" stroke-linecap="butt" stroke-linejoin="miter" x="3" y="3.5" width="18" height="17"/><path fill="none" stroke="#c7c7c7" stroke-width="1.837" stroke-linecap="butt" stroke-linejoin="miter" d="M15.4 3.5v17"/><path d="M7 7.6L12.4 12 7 16.4z" fill="#c7c7c7"/></svg>
<div class="b" style="left:1651px;top:1758px;width:765.5px;height:1.6px;background:#4d4d4d;"></div>
<div class="t" style="left:1660.3px;top:1767.6px;font:22px/22px 'Liberation Mono',monospace;color:#9aa0a6;-webkit-text-stroke:0.3px;">element.style <span style="color:#e3e3e3">{</span></div>
<div class="t" style="left:1696.3px;top:1799.7px;font:22px/22px 'Liberation Mono',monospace;color:#e3e3e3;-webkit-text-stroke:0.3px;"><span style="color:#5cd5fb">position</span>: absolute;</div>
<div class="t" style="left:1696.3px;top:1827.8px;font:22px/22px 'Liberation Mono',monospace;color:#e3e3e3;-webkit-text-stroke:0.3px;"><span style="color:#5cd5fb">left</span>: 70.6622px;</div>
<div class="t" style="left:1696.3px;top:1855.9px;font:22px/22px 'Liberation Mono',monospace;color:#e3e3e3;-webkit-text-stroke:0.3px;"><span style="color:#5cd5fb">top</span>: 53.7216px;</div>
<div class="t" style="left:1696.3px;top:1884px;font:22px/22px 'Liberation Mono',monospace;color:#e3e3e3;-webkit-text-stroke:0.3px;"><span style="color:#5cd5fb">opacity</span>: 1;</div>
<div class="t" style="left:1696.3px;top:1912.1px;font:22px/22px 'Liberation Mono',monospace;color:#e3e3e3;-webkit-text-stroke:0.3px;"><span style="color:#5cd5fb">width</span>: 304.957px;</div>
<div class="t" style="left:1696.3px;top:1940.2px;font:22px/22px 'Liberation Mono',monospace;color:#e3e3e3;-webkit-text-stroke:0.3px;"><span style="color:#5cd5fb">height</span>: 241.194px;</div>
<div class="b" style="left:2416.5px;top:1706.5px;width:198.5px;height:800px;background:#282828;overflow:hidden;border-left:1.6px solid #4d4d4d;box-sizing:border-box">
<div class="b" style="left:0px;top:22.5px;width:400px;height:2px;border-top:2px dotted #c9c9c9;"></div>
<div class="t" style="left:66.4px;top:32.2px;font:21.5px/21.5px 'Liberation Sans',sans-serif;color:#e3e3e3;">53.722</div>
<div class="b" style="left:-200px;top:59.5px;width:800px;height:37.5px;background:#ae8a5b;border-top:2px dashed #111;box-sizing:border-box;"></div>
<div class="b" style="left:-200px;top:96.8px;width:800px;height:38px;background:#e5c888;border-top:2.5px solid #111;box-sizing:border-box;"></div>
<div class="b" style="left:-200px;top:134.5px;width:800px;height:111.3px;background:#b9c884;border-top:2px dashed #111;border-bottom:2px dashed #111;box-sizing:border-box;"></div>
<div class="b" style="left:-200px;top:245.8px;width:800px;height:38px;background:#e5c888;"></div>
<div class="b" style="left:-200px;top:283.5px;width:800px;height:300px;background:#ae8a5b;border-top:2.5px solid #111;box-sizing:border-box;"></div>
<div class="b" style="left:83.2px;top:80.2px;width:12px;height:2px;background:#222;"></div>
<div class="b" style="left:83.2px;top:116.9px;width:12px;height:2px;background:#222;"></div>
<div class="b" style="left:83.2px;top:152px;width:12px;height:2px;background:#222;"></div>
<div class="b" style="left:83.2px;top:228px;width:12px;height:2px;background:#222;"></div>
<div class="b" style="left:83.2px;top:265.2px;width:12px;height:2px;background:#222;"></div>
<div class="b" style="left:-2.9px;top:171.1px;width:184.2px;height:37.6px;background:#8cb5c0;box-shadow:inset 0 0 0 2.5px #111;"></div>
<div class="t" style="left:5px;top:179.1px;font:22.5px/22.5px 'Liberation Sans',sans-serif;color:#1f1f1f;transform:scaleX(0.9579);transform-origin:0 0;">304.953×241.188</div>
<div class="b" style="left:186.3px;top:190px;width:12px;height:2px;background:#222;"></div>
<div class="t" style="left:-26.3px;top:143.3px;font:21.5px/21.5px 'Liberation Sans',sans-serif;color:#2a2a2a;">padding</div>
<div class="b" style="left:1px;top:115.5px;width:4px;height:2px;background:#222;"></div>
</div>
<div class="b" style="left:2568.2px;top:1538px;width:45px;height:44.5px;background:#282828;box-shadow:inset 0 0 0 1.5px #555;"></div>
<svg class="b" style="left:2588.5px;top:1553px" width="9" height="14" viewBox="0 0 9 14"><path d="M0 0v14l9-7z" fill="#8a8a8a"/></svg>
<div class="b" style="left:2614px;top:1495px;width:1.5px;height:459px;background:#3d3d3d;"></div>
<div class="b" style="left:699px;top:102px;width:2600px;height:1393.5px;background:#1f2020;border-radius:20px 0 0 20px;box-shadow:0 30px 70px 2px rgba(0,0,0,.68),0 0 0 1px #000;"></div>
<div class="b" style="left:699px;top:102px;width:2495px;height:1393.5px;border-radius:20px 0 0 20px;overflow:hidden">
<div class="b" style="left:-699px;top:-102px;width:3194px;height:1954px">
<div class="b" style="left:699px;top:102px;width:2495px;height:80px;background:#1f2020;"></div>
<div class="b" style="left:739.8px;top:130.8px;width:24.4px;height:24.4px;background:#fe5f57;border-radius:50%;"></div>
<div class="b" style="left:779.4px;top:130.8px;width:24.4px;height:24.4px;background:#febc2e;border-radius:50%;"></div>
<div class="b" style="left:819.8px;top:130.8px;width:24.4px;height:24.4px;background:#28c840;border-radius:50%;"></div>
<svg class="b" style="left:860px;top:113px" width="510" height="70" viewBox="860 113 510 70"><path d="M863 182.5c10 0 18.5-8 18.5-18.5V132c0-10 8-18.5 18.5-18.5h428c10 0 18.5 8 18.5 18.5v32c0 10 8 18.5 18.5 18.5z" fill="#3c3c3c"/></svg>
<div class="b" style="left:899.4px;top:126.8px;width:30px;height:30px;background:#202020;border-radius:6px;box-shadow:inset 0 0 0 1px #4a4a4a;"></div>
<svg class="b" style="left:899.4px;top:126.8px" width="30" height="30" viewBox="0 0 30 30"><path d="M15 5.5L5 23.5h20zM15 5.5l-3.5 18M15 5.5l5 18M8.5 18l16 5.5M11 13.5l11 10M13 9.5l7 14" fill="none" stroke="#f2f2f2" stroke-width="1.3" stroke-linejoin="round"/></svg>
<div class="t" style="left:947.5px;top:130.2px;font:24px/24px 'Liberation Sans',sans-serif;color:#e3e3e3;letter-spacing:0.296px;-webkit-text-stroke:0.35px;width:345px;overflow:hidden;-webkit-mask-image:linear-gradient(90deg,#000 86%,rgba(0,0,0,.1) 99%);mask-image:linear-gradient(90deg,#000 86%,rgba(0,0,0,.1) 99%);">Test Connector &amp; Shape · AFF</div>
<svg class="b" style="left:1302px;top:131.1px;overflow:visible;" width="23.4" height="23.4" viewBox="0 0 24 24"><path fill="none" stroke="#e3e3e3" stroke-width="2.872" stroke-linecap="butt" stroke-linejoin="miter" d="M4.6 4.6l14.8 14.8M19.4 4.6L4.6 19.4"/></svg>
<svg class="b" style="left:1372.2px;top:129.4px;overflow:visible;" width="26.7" height="26.7" viewBox="0 0 24 24"><path fill="none" stroke="#dedede" stroke-width="2.7" stroke-linecap="round" stroke-linejoin="round" d="M12 3.6v16.8M3.6 12h16.8"/></svg>
<div class="t" style="left:1613px;top:123px;font:35px/35px 'Liberation Sans',sans-serif;color:#f5321f;transform:scaleX(0.9941);transform-origin:0 0;">Canvas Renderer</div>
<div class="b" style="left:3143.8px;top:113.6px;width:80px;height:56px;background:#3c3c3c;border-radius:20px;"></div>
<svg class="b" style="left:3157.8px;top:128.3px;overflow:visible;" width="27.4" height="27.4" viewBox="0 0 24 24"><path fill="none" stroke="#f0f0f0" stroke-width="2.8" stroke-linecap="round" stroke-linejoin="round" d="M5.6 9l6.4 6.4L18.4 9"/></svg>
<div class="b" style="left:699px;top:182px;width:2495px;height:93.2px;background:#3c3c3c;border-radius:16px 0 0 0;"></div>
<svg class="b" style="left:726px;top:211.5px;overflow:visible;" width="32" height="32" viewBox="0 0 24 24"><path fill="none" stroke="#c7c7c7" stroke-width="2.1" stroke-linecap="round" stroke-linejoin="round" d="M20 12H4.6M11.4 4.8L4.2 12l7.2 7.2"/></svg>
<svg class="b" style="left:798px;top:211.5px;overflow:visible;" width="32" height="32" viewBox="0 0 24 24"><path fill="none" stroke="#7d7d7d" stroke-width="2.1" stroke-linecap="round" stroke-linejoin="round" d="M4 12h15.4M12.6 4.8l7.2 7.2-7.2 7.2"/></svg>
<svg class="b" style="left:870.5px;top:211.5px;overflow:visible;" width="32" height="32" viewBox="0 0 24 24"><path fill="none" stroke="#c7c7c7" stroke-width="2.1" stroke-linecap="round" stroke-linejoin="round" d="M19.6 12a7.6 7.6 0 11-2.4-5.6"/><path d="M20.4 3.6v6.2h-6.2z" fill="#c7c7c7"/></svg>
<div class="b" style="left:938.4px;top:194px;width:1929.6px;height:67.6px;background:#282828;border-radius:34px;"></div>
<div class="b" style="left:947.8px;top:203.5px;width:48px;height:48px;background:#3c3c3c;border-radius:50%;"></div>
<svg class="b" style="left:955.4px;top:211.1px;overflow:visible;" width="32.8" height="32.8" viewBox="0 0 24 24"><circle fill="none" stroke="#e3e3e3" stroke-width="1.9" stroke-linecap="round" stroke-linejoin="round" cx="12" cy="12" r="8.9"/><path fill="none" stroke="#e3e3e3" stroke-width="1.9" stroke-linecap="round" stroke-linejoin="round" d="M12 11.2v5.2"/><circle cx="12" cy="7.9" r="1.05" fill="#e3e3e3"/></svg>
<div class="t" style="left:1012.4px;top:213.9px;font:29px/29px 'Liberation Sans',sans-serif;color:#c7c7c7;transform:scaleX(1.0506);transform-origin:0 0;"><span style="color:#e8e8e8">localhost</span>:8080/workspace/04ec6c42-ad64-4fb0-be56-20d80f8e1cc6/KUVr6aQTdm?mode=edgeless</div>
<svg class="b" style="left:2736.8px;top:208.5px;overflow:visible;" width="38.5" height="38.5" viewBox="0 0 24 24"><path fill="none" stroke="#c7c7c7" stroke-width="1.869" stroke-linecap="butt" stroke-linejoin="miter" stroke-linejoin="round" d="M11 4.6H3.4v11.8h17.2V12.5M8.4 19.8h7.2M12 16.4v3.4"/><path fill="none" stroke="#c7c7c7" stroke-width="1.869" stroke-linecap="butt" stroke-linejoin="miter" d="M17.4 3.2v7.6M13.8 7.6l3.6 3.4 3.6-3.4"/></svg>
<svg class="b" style="left:2801.4px;top:209.2px;overflow:visible;" width="36.6" height="36.6" viewBox="0 0 24 24"><path fill="none" stroke="#c7c7c7" stroke-width="1.966" stroke-linecap="butt" stroke-linejoin="miter" stroke-linejoin="miter" d="M12 4.2l2.4 5.4 5.8.5-4.4 3.9 1.3 5.7-5.1-3-5.1 3 1.3-5.7-4.4-3.9 5.8-.5z"/></svg>
<svg class="b" style="left:2901.7px;top:208.2px;overflow:visible;" width="39.4" height="39.4" viewBox="0 0 24 24"><path fill="none" stroke="#c7c7c7" stroke-width="1.828" stroke-linecap="butt" stroke-linejoin="miter" stroke-linejoin="round" d="M9.6 5.8a2.3 2.3 0 014.6 0h4.4v4.8a2.3 2.3 0 010 4.6v4.8H4.2v-4.4a2.5 2.5 0 000-5V5.8z"/></svg>
<div class="b" style="left:2972.8px;top:212.5px;width:2.8px;height:31.5px;background:#6a6a6a;border-radius:2px;"></div>
<svg class="b" style="left:3002.7px;top:206.7px;overflow:visible;" width="42.7" height="42.7" viewBox="0 0 24 24"><path fill="none" stroke="#c7c7c7" stroke-width="1.8" stroke-linecap="butt" stroke-linejoin="miter" d="M12 3.2v11.4M6.6 9.8l5.4 5.2 5.4-5.2M4 15.6v4.2h16v-4.2"/></svg>
<div class="b" style="left:3075.8px;top:207.5px;width:40.5px;height:40.5px;background:#2383d5;border-radius:50%;"></div>
<div class="t" style="left:3087px;top:215px;font:26px/26px 'Liberation Sans',sans-serif;color:#fff;">Y</div>
<svg class="b" style="left:3148.8px;top:209.2px;overflow:visible;" width="37.5" height="37.5" viewBox="0 0 24 24"><circle cy="5.8" cx="12" r="1.8" fill="#c7c7c7"/><circle cx="12" cy="12" r="1.8" fill="#c7c7c7"/><circle cy="18.2" cx="12" r="1.8" fill="#c7c7c7"/></svg>
</div></div>
<div class="b" style="left:698.2px;top:102px;width:2520px;height:1394.3px;border-radius:21px 0 0 21px;border:2px solid #555;border-top-color:#6c6c6c;border-bottom-color:#4a4a4a;pointer-events:none;"></div>
<div class="b" style="left:699px;top:275.2px;width:494.5px;height:1220.3px;background:#141414;border-radius:0 0 0 20px;"></div>
<div class="b" style="left:1193px;top:275.2px;width:1.4px;height:1220.3px;background:#2c2c2c;"></div>
<svg class="b" style="left:740.5px;top:306.3px;overflow:visible;" width="42.9" height="42.9" viewBox="0 0 24 24"><rect fill="none" stroke="#f2f2f2" stroke-width="1.676" stroke-linecap="round" stroke-linejoin="round" x="3.2" y="4.7" width="17.6" height="14.6" rx="2.2"/><path fill="none" stroke="#f2f2f2" stroke-width="1.676" stroke-linecap="round" stroke-linejoin="round" d="M9.2 4.7v14.6"/></svg>
<div class="b" style="left:742px;top:405.9px;width:64.3px;height:64.3px;border-radius:9px;background:linear-gradient(200deg,#4a2bf4 0%,#4b2df3 30%,#3d5aee 62%,#2e8de8 100%);"></div>
<div class="t" style="left:822.8px;top:403.3px;font:29.5px/29.5px 'Liberation Sans',sans-serif;color:#ececec;transform:scaleX(1.0138);transform-origin:0 0;-webkit-text-stroke:0.45px;">New Local Test 2</div>
<svg class="b" style="left:823.2px;top:446.1px;overflow:visible;" width="29.2" height="29.2" viewBox="0 0 24 24"><path fill="none" stroke="#7c7b72" stroke-width="1.969" stroke-linecap="round" stroke-linejoin="round" d="M6.5 19.2a4.3 4.3 0 01-.9-8.5 6.2 6.2 0 0112-1.4 5 5 0 01.4 9.9z"/></svg>
<div class="t" style="left:858.9px;top:446.7px;font:25px/25px 'Liberation Sans',sans-serif;color:#8e8d91;transform:scaleX(0.9874);transform-origin:0 0;">Cloud</div>
<div class="b" style="left:1104.9px;top:414px;width:48px;height:48px;background:#2f9ae6;border-radius:50%;"></div>
<div class="t" style="left:1120px;top:425.5px;font:27px/27px 'Liberation Sans',sans-serif;color:#111;">D</div>
<div class="b" style="left:730.3px;top:504.2px;width:350.1px;height:71.4px;background:#0f0f0f;border-radius:17px;box-shadow:inset 0 0 0 1.6px #3a3a3a;"></div>
<svg class="b" style="left:755.9px;top:520px;overflow:visible;" width="38.4" height="38.4" viewBox="0 0 24 24"><circle fill="none" stroke="#f2f2f2" stroke-width="1.875" stroke-linecap="round" stroke-linejoin="round" cx="10.4" cy="10.4" r="7"/><path fill="none" stroke="#f2f2f2" stroke-width="1.875" stroke-linecap="round" stroke-linejoin="round" d="M15.6 15.6l5.2 5.2"/></svg>
<div class="t" style="left:813.6px;top:525px;font:29.5px/29.5px 'Liberation Sans',sans-serif;color:#ececec;transform:scaleX(0.9532);transform-origin:0 0;">Search</div>
<svg class="b" style="left:970px;top:527px" width="28" height="27" viewBox="0 0 28 27" fill="none" stroke="#8a8a8a" stroke-width="2.4"><path d="M9.5 9h9v9h-9zM9.5 9a3.6 3.6 0 11-3.6-3.6A3.6 3.6 0 019.5 9zM18.5 9a3.6 3.6 0 113.6-3.6A3.6 3.6 0 0118.5 9zM18.5 18a3.6 3.6 0 113.6 3.6A3.6 3.6 0 0118.5 18zM9.5 18a3.6 3.6 0 11-3.6 3.6A3.6 3.6 0 019.5 18z"/></svg>
<div class="t" style="left:1009.5px;top:526px;font:29px/29px 'Liberation Sans',sans-serif;color:#8a8a8a;">+</div>
<div class="t" style="left:1036.5px;top:526px;font:29px/29px 'Liberation Sans',sans-serif;color:#8a8a8a;">K</div>
<div class="b" style="left:1097.2px;top:508.6px;width:63.3px;height:62.8px;background:#0f0f0f;border-radius:17px;box-shadow:inset 0 0 0 1.6px #3a3a3a;"></div>
<svg class="b" style="left:1113px;top:524px;overflow:visible;" width="32" height="32" viewBox="0 0 24 24"><path fill="none" stroke="#f2f2f2" stroke-width="2.25" stroke-linecap="round" stroke-linejoin="round" d="M12 3.6v16.8M3.6 12h16.8"/></svg>
<svg class="b" style="left:753.7px;top:601.6px;overflow:visible;" width="40.8" height="40.8" viewBox="0 0 24 24"><path fill="none" stroke="#f2f2f2" stroke-width="1.647" stroke-linecap="round" stroke-linejoin="round" d="M14.4 2.8H10a2.6 2.6 0 00-2.6 2.6v9.2a2.6 2.6 0 002.6 2.6h8a2.6 2.6 0 002.6-2.6V8.6z"/><path fill="none" stroke="#f2f2f2" stroke-width="1.647" stroke-linecap="round" stroke-linejoin="round" d="M14.6 3v3.6a2 2 0 002 2h3.6M11.4 9.4h2M11.4 13h5.2M7.2 6.8H6a2.6 2.6 0 00-2.6 2.6v9.2A2.6 2.6 0 006 21.2h7.4a2.6 2.6 0 002.6-2.6v-1.2"/></svg>
<div class="t" style="left:811px;top:606.6px;font:29.5px/29.5px 'Liberation Sans',sans-serif;color:#ececec;transform:scaleX(0.9913);transform-origin:0 0;">All docs</div>
<svg class="b" style="left:756px;top:672.4px;overflow:visible;" width="36.1" height="36.1" viewBox="0 0 24 24"><rect fill="none" stroke="#f2f2f2" stroke-width="1.863" stroke-linecap="round" stroke-linejoin="round" x="3.3" y="4.6" width="17.4" height="16" rx="2.6"/><path fill="none" stroke="#f2f2f2" stroke-width="1.863" stroke-linecap="round" stroke-linejoin="round" d="M3.3 9.6h17.4M7.8 2.8v3.6M16.2 2.8v3.6"/><path d="M7 12.4h2.4v2.4H7zM10.8 12.4h2.4v2.4h-2.4zM14.6 12.4H17v2.4h-2.4zM7 16.2h2.4v2.4H7zM10.8 16.2h2.4v2.4h-2.4z" fill="#f2f2f2"/></svg>
<div class="t" style="left:811px;top:674.8px;font:29.5px/29.5px 'Liberation Sans',sans-serif;color:#ececec;transform:scaleX(0.9865);transform-origin:0 0;">Journals</div>
<svg class="b" style="left:754.2px;top:738.7px;overflow:visible;" width="39.5" height="39.5" viewBox="0 0 24 24"><path fill="none" stroke="#f2f2f2" stroke-width="1.7" stroke-linecap="round" stroke-linejoin="round" d="M12 3a6 6 0 00-6 6v4.2l-1.7 3.6h15.4L18 13.2V9a6 6 0 00-6-6zM9.4 17.2a2.6 2.6 0 005.2 0"/></svg>
<div class="t" style="left:811px;top:742.5px;font:29.5px/29.5px 'Liberation Sans',sans-serif;color:#ececec;transform:scaleX(1.03);transform-origin:0 0;">Notifications</div>
<svg class="b" style="left:753.9px;top:806.1px;overflow:visible;" width="40.2" height="40.2" viewBox="0 0 24 24"><circle fill="none" stroke="#f2f2f2" stroke-width="1.672" stroke-linecap="round" stroke-linejoin="round" cx="12" cy="12" r="3.1"/><path fill="none" stroke="#f2f2f2" stroke-width="1.672" stroke-linecap="round" stroke-linejoin="round" d="M10.3 3.5c.5-1.3 2.9-1.3 3.4 0l.3.8c.3.8 1.2 1.2 2 .900l.800-.400c1.3-.600 3 1.1 2.4 2.4l-.400.8c-.300.8.100 1.7.900 2l.800.3c1.3.500 1.3 2.9 0 3.4l-.800.3c-.800.3-1.2 1.2-.900 2l.400.8c.600 1.3-1.1 3-2.4 2.4l-.800-.400c-.800-.300-1.7.100-2 .900l-.300.8c-.500 1.3-2.9 1.3-3.4 0l-.3-.800c-.3-.800-1.2-1.2-2-.900l-.800.4c-1.3.600-3-1.1-2.4-2.4l.400-.800c.300-.800-.100-1.7-.900-2l-.800-.300c-1.3-.500-1.3-2.9 0-3.4l.800-.300c.800-.300 1.2-1.2.900-2l-.400-.800c-.600-1.3 1.1-3 2.4-2.4l.800.4c.800.3 1.7-.100 2-.900z"/></svg>
<div class="t" style="left:811px;top:810.7px;font:29.5px/29.5px 'Liberation Sans',sans-serif;color:#ececec;transform:scaleX(1.0038);transform-origin:0 0;">Settings</div>
<div class="t" style="left:731px;top:887.5px;font:24.5px/24.5px 'Liberation Sans',sans-serif;color:#7a7a7a;transform:scaleX(1.0273);transform-origin:0 0;">Favorites</div>
<svg class="b" style="left:850.8px;top:897.7px" width="11" height="9" viewBox="0 0 11 9"><path d="M0 0h11L5.5 9z" fill="#7a7a7a"/></svg>
<div class="b" style="left:909.9px;top:956.1px;width:71.8px;height:71.8px;background:#212121;border-radius:50%;"></div>
<svg class="b" style="left:925.8px;top:970.5px;overflow:visible;" width="40.4" height="40.4" viewBox="0 0 24 24"><path fill="none" stroke="#ececec" stroke-width="1.544" stroke-linecap="round" stroke-linejoin="round" d="M12 3.6l2.5 5.3c.1.3.4.5.7.5l5.6.8-4.1 4c-.2.2-.3.6-.3.9l1 5.6-5-2.7c-.3-.1-.6-.1-.8 0l-5 2.7 1-5.6c0-.3-.1-.7-.3-.9l-4.1-4 5.6-.8c.3 0 .6-.2.7-.5z"/></svg>
<div class="t" style="left:866px;top:1043.3px;font:29.5px/29.5px 'Liberation Sans',sans-serif;color:#7c7c7c;transform:scaleX(1.0064);transform-origin:0 0;">No favorites</div>
<div class="t" style="left:731px;top:1127.4px;font:24.5px/24.5px 'Liberation Sans',sans-serif;color:#7a7a7a;transform:scaleX(1.0159);transform-origin:0 0;">Organize</div>
<svg class="b" style="left:847.7px;top:1138px" width="11" height="9" viewBox="0 0 11 9"><path d="M0 0h11L5.5 9z" fill="#7a7a7a"/></svg>
<svg class="b" style="left:724.5px;top:1193px;overflow:visible;" width="27" height="27" viewBox="0 0 24 24"><path fill="none" stroke="#f2f2f2" stroke-width="2.311" stroke-linecap="round" stroke-linejoin="round" d="M9 5.6l6.4 6.4-6.4 6.4"/></svg>
<svg class="b" style="left:754.9px;top:1186.9px;overflow:visible;" width="38.1" height="38.1" viewBox="0 0 24 24"><path fill="none" stroke="#f2f2f2" stroke-width="1.763" stroke-linecap="round" stroke-linejoin="round" d="M3.3 6.8a2.6 2.6 0 012.6-2.6h3.5c.700 0 1.3.300 1.8.800l1.2 1.4c.300.3.700.5 1.1.500h4.6a2.6 2.6 0 012.6 2.6v7.7a2.6 2.6 0 01-2.6 2.6H5.9a2.6 2.6 0 01-2.6-2.6z"/></svg>
<div class="t" style="left:819.2px;top:1191px;font:29.5px/29.5px 'Liberation Sans',sans-serif;color:#ececec;transform:scaleX(0.9842);transform-origin:0 0;">First Folder</div>
<div class="t" style="left:731px;top:1259.2px;font:24.5px/24.5px 'Liberation Sans',sans-serif;color:#7a7a7a;transform:scaleX(1.0548);transform-origin:0 0;">Collections</div>
<svg class="b" style="left:874px;top:1268px" width="9.5" height="11" viewBox="0 0 9.5 11"><path d="M0 0v11L9.5 5.5z" fill="#7a7a7a"/></svg>
<div class="t" style="left:731px;top:1315.2px;font:24.5px/24.5px 'Liberation Sans',sans-serif;color:#7a7a7a;transform:scaleX(1.0318);transform-origin:0 0;">Tags</div>
<svg class="b" style="left:801px;top:1324px" width="9.5" height="11" viewBox="0 0 9.5 11"><path d="M0 0v11L9.5 5.5z" fill="#7a7a7a"/></svg>
<div class="b" style="left:730.8px;top:1368.6px;width:429.8px;height:102.4px;background:#0e0e0e;border-radius:17px;box-shadow:inset 0 0 0 1.6px #2c2c2c;"></div>
<svg class="b" style="left:783.2px;top:1399.6px;overflow:visible;" width="41.6" height="41.6" viewBox="0 0 24 24"><path fill="none" stroke="#b6b6aa" stroke-width="1.733" stroke-linecap="round" stroke-linejoin="round" d="M12 3.3v11.4M7.4 10.6l4.6 4.4 4.6-4.4M7 8.6H5.9a2.6 2.6 0 00-2.6 2.6v6.9a2.6 2.6 0 002.6 2.6h12.2a2.6 2.6 0 002.6-2.6v-6.9a2.6 2.6 0 00-2.6-2.6H17"/></svg>
<div class="t" style="left:852.8px;top:1405.2px;font:29.5px/29.5px 'Liberation Sans',sans-serif;color:#ececec;transform:scaleX(1.0044);transform-origin:0 0;">Download App</div>
<div class="b" style="left:1146.7px;top:1366.2px;width:16px;height:16px;background:#2f9ae6;border-radius:50%;"></div>
<div class="b" style="left:1194.4px;top:275.2px;width:1052px;height:106.5px;background:#141414;border-bottom:1.3px solid #2e2e2e;box-sizing:border-box;"></div>
<div class="b" style="left:1226px;top:295.6px;width:127.6px;height:64px;background:#252525;border-radius:14px;"></div>
<div class="b" style="left:1297.9px;top:304px;width:48px;height:48px;background:#414141;border-radius:9px;"></div>
<div class="b" style="left:1716.8px;top:333.8px;width:4.5px;height:4.5px;background:#e8e8e8;border-radius:50%;"></div>
<svg class="b" style="left:1763.7px;top:306.8px;overflow:visible;" width="40.5" height="40.5" viewBox="0 0 24 24"><path fill="none" stroke="#f2f2f2" stroke-width="1.658" stroke-linecap="round" stroke-linejoin="round" d="M12 3.6l2.5 5.3c.1.3.4.5.7.5l5.6.8-4.1 4c-.2.2-.3.6-.3.9l1 5.6-5-2.7c-.3-.1-.6-.1-.8 0l-5 2.7 1-5.6c0-.3-.1-.7-.3-.9l-4.1-4 5.6-.8c.3 0 .6-.2.7-.5z"/></svg>
<svg class="b" style="left:1831.8px;top:307.8px;overflow:visible;" width="40.4" height="40.4" viewBox="0 0 24 24"><circle fill="none" stroke="#f2f2f2" stroke-width="1.663" stroke-linecap="round" stroke-linejoin="round" cx="12" cy="12" r="8.9"/><path fill="none" stroke="#f2f2f2" stroke-width="1.663" stroke-linecap="round" stroke-linejoin="round" d="M12 11.2v5.2"/><circle cx="12" cy="7.9" r="1.05" fill="#f2f2f2"/></svg>
<svg class="b" style="left:1901px;top:309px;overflow:visible;" width="38.1" height="38.1" viewBox="0 0 24 24"><circle cx="5.8" cy="12" r="1.8" fill="#f2f2f2"/><circle cx="12" cy="12" r="1.8" fill="#f2f2f2"/><circle cx="18.2" cy="12" r="1.8" fill="#f2f2f2"/></svg>
<svg class="b" style="left:2025.8px;top:306.1px;overflow:visible;" width="44.3" height="44.3" viewBox="0 0 24 24"><path fill="none" stroke="#f2f2f2" stroke-width="1.516" stroke-linecap="round" stroke-linejoin="round" d="M3 3.3h18M4.6 3.3v11.2h14.8V3.3M12 14.5v4.6M12 18.4l-3.8 2.8M12 18.4l3.8 2.8M8.6 8.2v3M12 6.8v4.4M15.4 9v2.2"/></svg>
<div class="b" style="left:2112.3px;top:307.7px;width:1.5px;height:40.3px;background:#3a3a3a;"></div>
<svg class="b" style="left:2160.3px;top:306.3px;overflow:visible;" width="43.1" height="43.1" viewBox="0 0 24 24"><rect fill="none" stroke="#f2f2f2" stroke-width="1.672" stroke-linecap="round" stroke-linejoin="round" x="3.2" y="4.7" width="17.6" height="14.6" rx="2.2"/><path fill="none" stroke="#f2f2f2" stroke-width="1.672" stroke-linecap="round" stroke-linejoin="round" d="M14.8 4.7v14.6"/></svg>
<svg class="b" style="left:1194.4px;top:381px" width="1052" height="1114.5" viewBox="1194.4 381 1052 1114.5"><rect x="1194.4" y="381" width="1052" height="1115" fill="#54769b"/><defs><pattern id="dots2" x="1210.4" y="374.2" width="40" height="40" patternUnits="userSpaceOnUse"><circle cx="20" cy="20" r="1.8" fill="#587a9f"/></pattern></defs><rect x="1194.4" y="381" width="1052" height="1115" fill="url(#dots2)"/><polygon points="1608.8,303 1294,795.4 1923.5,795.4" fill="#a3b8af"/><polygon points="1608.8,348.5 1338.3,770.8 1880.3,770.8" fill="#a297bf"/><polygon points="1738.6,940.3 1426.5,1184.1 1738.6,1427.9 2050.8,1184.1" fill="#a3b8af"/><polygon points="1738.6,970.5 1465.5,1184.1 1738.6,1397.7 2011.3,1184.1" fill="#a297bf"/><rect x="1559" y="381" width="101" height="1.2" fill="#f9d75a"/><rect x="1587.6" y="381" width="43" height="1.2" fill="#f77087"/><rect x="2210.4" y="589.4" width="60" height="454.3" rx="16" fill="#5a7ca1"/><rect x="1194.4" y="1336.4" width="1052" height="160" fill="#54769b"/><rect x="1346.3" y="1336.3" width="749.8" height="129.1" rx="32" fill="#58799e" stroke="#5e7fa3" stroke-width="1.5"/><path d="M1742 1337v128" stroke="#5e7fa3" stroke-width="1.5"/><g fill="none" stroke="#7d9cc0" stroke-width="1.8"><path d="M1856 1465l8-108 119 9-8 99"/></g><g fill="#5f81a6" stroke="none"><rect x="1844" y="1374" width="51" height="55" rx="5" transform="rotate(-5 1869 1401)"/><rect x="1941" y="1377" width="50" height="54" rx="5" transform="rotate(6 1966 1404)"/><rect x="1891" y="1387" width="52" height="54" rx="5" transform="rotate(2 1917 1414)" fill="#6284a9"/></g><text x="1949" y="1416" transform="rotate(6 1949 1416)" font-family="Liberation Sans, sans-serif" font-style="italic" font-size="29" fill="#86a5c8" textLength="34">H1</text><path d="M1903 1396h28M1917 1396v34M1910 1430.5h14" stroke="#86a5c8" stroke-width="2.4" fill="none"/><text x="1865" y="1451" transform="rotate(4 1865 1451)" font-family="Liberation Sans, sans-serif" font-size="9" fill="#6c8db2" textLength="88">to shape not to adapt</text></svg>
<svg class="b" style="left:1852.4px;top:1384.4px;overflow:visible;" width="34.1" height="34.1" viewBox="0 0 24 24"><path fill="none" stroke="#86a5c8" stroke-width="1.83" stroke-linecap="round" stroke-linejoin="round" d="M10 14a4.2 4.2 0 005.94 0l3.6-3.6a4.2 4.2 0 00-5.94-5.94L12.4 5.6"/><path fill="none" stroke="#86a5c8" stroke-width="1.83" stroke-linecap="round" stroke-linejoin="round" d="M14 10a4.2 4.2 0 00-5.94 0l-3.6 3.6a4.2 4.2 0 005.94 5.94L11.6 18.4"/></svg>
<svg class="b" style="left:1381.2px;top:1375.7px;overflow:visible;" width="48.6" height="48.6" viewBox="0 0 24 24"><path fill="none" stroke="#61a8ee" stroke-width="1.483" stroke-linecap="round" stroke-linejoin="round" d="M5.2 4.2l3.6 15.6 3.6-5.6 6.8-1.6z"/></svg>
<svg class="b" style="left:1474.7px;top:1376px;overflow:visible;" width="46.4" height="46.4" viewBox="0 0 24 24"><path fill="none" stroke="#8fb0d6" stroke-width="1.552" stroke-linecap="round" stroke-linejoin="round" d="M7.6 3.4v17.2M16.4 3.4v17.2M3.4 7.6h17.2M3.4 16.4h17.2"/></svg>
<svg class="b" style="left:1567.5px;top:1376.2px;overflow:visible;" width="46.6" height="46.6" viewBox="0 0 24 24"><path fill="none" stroke="#8fb0d6" stroke-width="1.545" stroke-linecap="round" stroke-linejoin="round" d="M3 20c4.4 0 5.6-2 6.8-6.2S13.2 7.6 19.6 7.6M15 3.8l5 3.8-4.4 4.6"/></svg>
<svg class="b" style="left:1659px;top:1377.4px;overflow:visible;" width="45.7" height="45.7" viewBox="0 0 24 24"><path fill="none" stroke="#8fb0d6" stroke-width="1.575" stroke-linecap="round" stroke-linejoin="round" d="M10 14a4.2 4.2 0 005.94 0l3.6-3.6a4.2 4.2 0 00-5.94-5.94L12.4 5.6"/><path fill="none" stroke="#8fb0d6" stroke-width="1.575" stroke-linecap="round" stroke-linejoin="round" d="M14 10a4.2 4.2 0 00-5.94 0l-3.6 3.6a4.2 4.2 0 005.94 5.94L11.6 18.4"/></svg>
<svg class="b" style="left:1419.4px;top:1363.3px;overflow:visible;" width="24.3" height="24.3" viewBox="0 0 24 24"><path fill="none" stroke="#61a8ee" stroke-width="1.778" stroke-linecap="round" stroke-linejoin="round" d="M5.6 15l6.4-6.4 6.4 6.4"/></svg>
<svg class="b" style="left:1511.7px;top:1363.3px;overflow:visible;" width="24.3" height="24.3" viewBox="0 0 24 24"><path fill="none" stroke="#8fb0d6" stroke-width="1.778" stroke-linecap="round" stroke-linejoin="round" d="M5.6 15l6.4-6.4 6.4 6.4"/></svg>
<svg class="b" style="left:1603.2px;top:1363.3px;overflow:visible;" width="24.3" height="24.3" viewBox="0 0 24 24"><path fill="none" stroke="#8fb0d6" stroke-width="1.778" stroke-linecap="round" stroke-linejoin="round" d="M5.6 15l6.4-6.4 6.4 6.4"/></svg>
<svg class="b" style="left:1768.4px;top:1382.5px;overflow:visible;" width="36" height="36" viewBox="0 0 24 24"><path fill="none" stroke="#6a8bb2" stroke-width="1.733" stroke-linecap="round" stroke-linejoin="round" d="M15 5.6L8.6 12l6.4 6.4"/></svg>
<svg class="b" style="left:2030.8px;top:1382.5px;overflow:visible;" width="36" height="36" viewBox="0 0 24 24"><path fill="none" stroke="#c5d8f0" stroke-width="1.733" stroke-linecap="round" stroke-linejoin="round" d="M9 5.6l6.4 6.4-6.4 6.4"/></svg>
<svg class="b" style="left:1231.2px;top:1397.2px;overflow:visible;" width="45.1" height="45.1" viewBox="0 0 24 24"><circle cx="5.8" cy="12" r="1.8" fill="#a9c1e2"/><circle cx="12" cy="12" r="1.8" fill="#a9c1e2"/><circle cx="18.2" cy="12" r="1.8" fill="#a9c1e2"/></svg>
<div class="b" style="left:1194.4px;top:311.9px;width:520.3px;height:53.8px;background:#fff;border-radius:6px;box-shadow:0 3px 10px rgba(0,0,0,.35);"></div>
<svg class="b" style="left:1214px;top:365px" width="34" height="18" viewBox="1214 365 34 18"><path d="M1215.6 365h30.4l-15.3 16.5z" fill="#fff"/></svg>
<div class="t" style="left:1212.6px;top:326.4px;font:bold 27px/27px 'Liberation Sans',sans-serif;color:#1a1aa6;transform:scaleX(1.0037);transform-origin:0 0;"><span style="color:#881280">canvas</span>.indexable-canvas</div>
<div class="t" style="left:1560px;top:328.4px;font:24.5px/24.5px 'Liberation Sans',sans-serif;color:#2b3a42;transform:scaleX(1.0807);transform-origin:0 0;">526 × 557.5</div>
<div class="b" style="left:2240px;top:275px;width:954px;height:1220.5px;overflow:hidden">
<div class="b" style="left:-2240px;top:-275px;width:3194px;height:1954px">
<div class="b" style="left:2245.5px;top:275.2px;width:2px;height:1220.3px;background:#5a5a5a;"></div>
<div class="b" style="left:2247px;top:275.2px;width:947px;height:1220.3px;background:#282828;"></div>
<div class="b" style="left:2247px;top:329px;width:947px;height:721.5px;overflow:hidden">
<div class="b" style="left:-2247px;top:-329px;width:3194px;height:1954px">
<div class="b" style="left:2247px;top:714.9px;width:947px;height:181.6px;background:#134875;"></div>
<div class="t" style="left:2792.5px;top:319.8px;font:22px/22px 'Liberation Mono',monospace;color:#7cacf8;-webkit-text-stroke:0.3px;"><span style="color:#9aa0a6">&lt;!----&gt;</span></div>
<svg class="b" style="left:2779px;top:357.3px" width="14" height="9" viewBox="0 0 14 9"><path d="M0 0h14L7 9z" fill="#c7c7c7"/></svg>
<div class="t" style="left:2794.5px;top:353.9px;font:22px/22px 'Liberation Mono',monospace;color:#7cacf8;-webkit-text-stroke:0.3px;"><span style="color:#7cacf8">&lt;affine-surface</span><span style="color:#a8c7fa"> data-block-id=</span></div>
<div class="t" style="left:2794.5px;top:383.7px;font:22px/22px 'Liberation Mono',monospace;color:#7cacf8;-webkit-text-stroke:0.3px;"><span style="color:#7cacf8">"</span><span style="color:#fe8d59">bzEcXFMlfi</span><span style="color:#7cacf8">"</span><span style="color:#a8c7fa"> data-range-sync-</span></div>
<div class="t" style="left:2794.5px;top:413.5px;font:22px/22px 'Liberation Mono',monospace;color:#7cacf8;-webkit-text-stroke:0.3px;"><span style="color:#a8c7fa">exclude=</span><span style="color:#7cacf8">"</span><span style="color:#fe8d59">true</span><span style="color:#7cacf8">"&gt;</span></div>
<div class="t" style="left:2816.3px;top:444.5px;font:22px/22px 'Liberation Mono',monospace;color:#7cacf8;-webkit-text-stroke:0.3px;"><span style="color:#9aa0a6">&lt;!----&gt;</span></div>
<svg class="b" style="left:2803.3px;top:481px" width="14" height="9" viewBox="0 0 14 9"><path d="M0 0h14L7 9z" fill="#c7c7c7"/></svg>
<div class="t" style="left:2820.7px;top:477.8px;font:22px/22px 'Liberation Mono',monospace;color:#7cacf8;-webkit-text-stroke:0.3px;"><span style="color:#7cacf8">&lt;div</span><span style="color:#a8c7fa"> class=</span><span style="color:#7cacf8">"</span><span style="color:#fe8d59">affine-edgeless-s</span></div>
<div class="t" style="left:2820.7px;top:507.6px;font:22px/22px 'Liberation Mono',monospace;color:#7cacf8;-webkit-text-stroke:0.3px;"><span style="color:#fe8d59">urface-block-container</span><span style="color:#7cacf8">"&gt;</span></div>
<div class="t" style="left:2841.2px;top:539.3px;font:22px/22px 'Liberation Mono',monospace;color:#7cacf8;-webkit-text-stroke:0.3px;"><span style="color:#9aa0a6">&lt;!-- attach canvas later in</span></div>
<div class="t" style="left:2841.2px;top:569.2px;font:22px/22px 'Liberation Mono',monospace;color:#7cacf8;-webkit-text-stroke:0.3px;"><span style="color:#9aa0a6">renderer --&gt;</span></div>
<div class="t" style="left:2841.2px;top:602px;font:22px/22px 'Liberation Mono',monospace;color:#7cacf8;-webkit-text-stroke:0.3px;"><span style="color:#7cacf8">&lt;canvas</span><span style="color:#a8c7fa"> width=</span><span style="color:#7cacf8">"</span><span style="color:#fe8d59">1052</span><span style="color:#7cacf8">"</span><span style="color:#a8c7fa"> height=</span></div>
<div class="t" style="left:2841.2px;top:632.3px;font:22px/22px 'Liberation Mono',monospace;color:#7cacf8;-webkit-text-stroke:0.3px;"><span style="color:#7cacf8">"</span><span style="color:#fe8d59">1115</span><span style="color:#7cacf8">"</span><span style="color:#a8c7fa"> style=</span><span style="color:#7cacf8">"</span><span style="color:#fe8d59">z-index: 6; wi</span></div>
<div class="t" style="left:2841.2px;top:661.3px;font:22px/22px 'Liberation Mono',monospace;color:#7cacf8;-webkit-text-stroke:0.3px;"><span style="color:#fe8d59">dth: 526px; height: 557.5px;</span></div>
<div class="t" style="left:2841.2px;top:689.2px;font:22px/22px 'Liberation Mono',monospace;color:#7cacf8;-webkit-text-stroke:0.3px;"><span style="color:#7cacf8">"&gt;</span></div>
<div class="t" style="left:2841.2px;top:723.3px;font:22px/22px 'Liberation Mono',monospace;color:#7cacf8;-webkit-text-stroke:0.3px;"><span style="color:#7cacf8">&lt;</span><span style="color:#a8c7fa;background:#8f6420;">canvas</span><span style="color:#a8c7fa"> class=</span><span style="color:#7cacf8">"</span><span style="color:#fe8d59">indexable-</span><span style="color:#fe8d59;background:#8f6420;">can</span></div>
<div class="t" style="left:2841.2px;top:753px;font:22px/22px 'Liberation Mono',monospace;color:#7cacf8;-webkit-text-stroke:0.3px;"><span style="color:#fe8d59;background:#8f6420;">vas</span><span style="color:#7cacf8">"</span><span style="color:#a8c7fa"> data-layer-id=</span><span style="color:#7cacf8">"</span><span style="color:#fe8d59">[Zz--Zz]</span></div>
<div class="t" style="left:2841.2px;top:782.9px;font:22px/22px 'Liberation Mono',monospace;color:#7cacf8;-webkit-text-stroke:0.3px;"><span style="color:#7cacf8">"</span><span style="color:#a8c7fa"> width=</span><span style="color:#7cacf8">"</span><span style="color:#fe8d59">1052</span><span style="color:#7cacf8">"</span><span style="color:#a8c7fa"> height=</span><span style="color:#7cacf8">"</span><span style="color:#fe8d59">1115</span><span style="color:#7cacf8">"</span></div>
<div class="t" style="left:2841.2px;top:813px;font:22px/22px 'Liberation Mono',monospace;color:#7cacf8;-webkit-text-stroke:0.3px;"><span style="color:#a8c7fa">style=</span><span style="color:#7cacf8">"</span><span style="color:#fe8d59">z-index: 1; width: 52</span></div>
<div class="t" style="left:2841.2px;top:843px;font:22px/22px 'Liberation Mono',monospace;color:#7cacf8;-webkit-text-stroke:0.3px;"><span style="color:#fe8d59">6px; height: 557.5px;</span></div>
<div class="t" style="left:2841.2px;top:871.6px;font:22px/22px 'Liberation Mono',monospace;color:#7cacf8;-webkit-text-stroke:0.3px;"><span style="color:#7cacf8">"&gt;</span><span style="color:#a9b8cc"> == </span><i style="color:#a9b8cc">$0</i></div>
<div class="t" style="left:2816.3px;top:904.8px;font:22px/22px 'Liberation Mono',monospace;color:#7cacf8;-webkit-text-stroke:0.3px;"><span style="color:#7cacf8">&lt;/div&gt;</span></div>
<div class="t" style="left:2793.5px;top:937.4px;font:22px/22px 'Liberation Mono',monospace;color:#7cacf8;-webkit-text-stroke:0.3px;"><span style="color:#7cacf8">&lt;/affine-surface&gt;</span></div>
<div class="t" style="left:2793.5px;top:968.7px;font:22px/22px 'Liberation Mono',monospace;color:#7cacf8;-webkit-text-stroke:0.3px;"><span style="color:#9aa0a6">&lt;!----&gt;</span></div>
<div class="t" style="left:2793.5px;top:999.7px;font:22px/22px 'Liberation Mono',monospace;color:#7cacf8;-webkit-text-stroke:0.3px;"><span style="color:#9aa0a6">&lt;!----&gt;</span></div>
<svg class="b" style="left:2781.5px;top:1032.5px" width="9" height="14" viewBox="0 0 9 14"><path d="M0 0v14l9-7z" fill="#c7c7c7"/></svg>
<div class="t" style="left:2796px;top:1031.4px;font:22px/22px 'Liberation Mono',monospace;color:#7cacf8;-webkit-text-stroke:0.3px;"><span style="color:#7cacf8">&lt;affine-edgeless-note</span><span style="color:#a8c7fa"> data-</span></div>
<div class="b" style="left:3171px;top:863.5px;width:40px;height:31px;background:#c3d5f6;border-radius:8px;"></div>
<svg class="b" style="left:3176px;top:868px" width="20" height="24" viewBox="0 0 20 24"><path d="M16 3H5a2 2 0 00-2 2v13l3.5-3H16" fill="none" stroke="#1c2b45" stroke-width="2.4"/><path d="M12 13l4 4 4-4" fill="none" stroke="#1c2b45" stroke-width="2.4"/></svg>
</div></div>
<div class="b" style="left:3121px;top:363px;width:50px;height:50px;background:#262626;border-radius:50%;box-shadow:0 2px 8px rgba(0,0,0,.6);"></div>
<svg class="b" style="left:3131px;top:372px" width="30" height="32" viewBox="0 0 30 32"><circle cx="15" cy="4.6" r="3.4" fill="#f2f2f2"/><path d="M2 9.5c8 2.4 18 2.4 26 0v3.6c-3 .9-6 1.5-8.5 1.8V31h-3.4V21h-2.2v10h-3.4V14.9c-2.5-.3-5.5-.9-8.5-1.8z" fill="#f2f2f2"/></svg>
<div class="b" style="left:2247px;top:275.2px;width:947px;height:53.3px;background:#3c3c3c;"></div>
<svg class="b" style="left:2262px;top:284px;overflow:visible;" width="36" height="36" viewBox="0 0 24 24"><path fill="none" stroke="#c7c7c7" stroke-width="2.2" stroke-linecap="butt" stroke-linejoin="miter" stroke-dasharray="2.1 2.15" d="M3.1 16V3.1h17.8v8"/><path fill="none" stroke="#c7c7c7" stroke-width="2.2" stroke-linecap="butt" stroke-linejoin="miter" d="M3 15.5v3.3h4"/><path fill="none" stroke="#c7c7c7" stroke-width="2.2" stroke-linecap="butt" stroke-linejoin="miter" d="M21.5 21.5L11.4 11.4M11 19.4V11h8.4"/></svg>
<svg class="b" style="left:2318.5px;top:284px;overflow:visible;" width="36" height="36" viewBox="0 0 24 24"><path fill="none" stroke="#c7c7c7" stroke-width="2.2" stroke-linecap="butt" stroke-linejoin="miter" d="M4.2 17.5V4.5h14.5M1 19.5h12.5"/><rect fill="none" stroke="#c7c7c7" stroke-width="2.2" stroke-linecap="butt" stroke-linejoin="miter" x="15.6" y="8.8" width="6" height="10.7" rx=".8"/></svg>
<div class="b" style="left:2372px;top:286px;width:1.6px;height:32px;background:#5e5e5e;"></div>
<div class="t" style="left:2398.7px;top:292.6px;font:24.5px/24.5px 'Liberation Sans',sans-serif;color:#a8c7fa;transform:scaleX(1.031);transform-origin:0 0;-webkit-text-stroke:0.75px;">Elements</div>
<div class="t" style="left:2546.6px;top:292.6px;font:24.5px/24.5px 'Liberation Sans',sans-serif;color:#c7c7c7;transform:scaleX(1.0257);transform-origin:0 0;-webkit-text-stroke:0.75px;">Console</div>
<div class="t" style="left:2680.6px;top:292.6px;font:24.5px/24.5px 'Liberation Sans',sans-serif;color:#c7c7c7;transform:scaleX(1.0336);transform-origin:0 0;-webkit-text-stroke:0.75px;">Sources</div>
<svg class="b" style="left:2800px;top:286px;overflow:visible;" width="32" height="32" viewBox="0 0 24 24"><path fill="none" stroke="#9e9e9e" stroke-width="2.25" stroke-linecap="butt" stroke-linejoin="miter" d="M4 5.6l6.4 6.4L4 18.4M12.4 5.6l6.4 6.4-6.4 6.4"/></svg>
<svg class="b" style="left:2906.7px;top:288.3px;overflow:visible;" width="26.4" height="26.4" viewBox="0 0 24 24"><path d="M12 2.2L1.2 21.2h21.6z" fill="#fe8d59"/><path d="M11 9h2v6.4h-2zM11 17h2v2.2h-2z" fill="#3c3c3c"/></svg>
<div class="t" style="left:2936.5px;top:292.6px;font:24.5px/24.5px 'Liberation Sans',sans-serif;color:#c7c7c7;">6</div>
<svg class="b" style="left:2965.6px;top:288.5px;overflow:visible;" width="26" height="26" viewBox="0 0 24 24"><path d="M4.2 2.8h15.6c1.1 0 2 .900 2 2v11.6c0 1.1-.900 2-2 2H7l-4.8 3.8V4.8c0-1.1.900-2 2-2z" fill="#7cacf8"/><path d="M6.4 6.8h11.2v1.7H6.4zM6.4 9.9h11.2v1.7H6.4zM6.4 13h7.8v1.7H6.4z" fill="#3c3c3c"/></svg>
<div class="t" style="left:2993.5px;top:292.6px;font:24.5px/24.5px 'Liberation Sans',sans-serif;color:#c7c7c7;">3</div>
<div class="b" style="left:3026.5px;top:286px;width:1.6px;height:32px;background:#5e5e5e;"></div>
<svg class="b" style="left:3046px;top:284px;overflow:visible;" width="36" height="36" viewBox="0 0 24 24"><path fill="none" stroke="#c7c7c7" stroke-width="2.133" stroke-linecap="butt" stroke-linejoin="miter" stroke-linejoin="round" d="M10.1 2.9h3.8l.5 2.7 1.7 1 2.6-.9 1.9 3.3-2.1 1.8v2l2.1 1.8-1.9 3.3-2.6-.9-1.7 1-.5 2.7h-3.8l-.5-2.7-1.7-1-2.6.9-1.9-3.3 2.1-1.8v-2L3.4 9l1.9-3.3 2.6.9 1.7-1z"/><circle cx="12" cy="12" r="2.7" fill="#c7c7c7"/></svg>
<svg class="b" style="left:3101.8px;top:284px;overflow:visible;" width="36" height="36" viewBox="0 0 24 24"><circle cy="5.8" cx="12" r="1.8" fill="#c7c7c7"/><circle cx="12" cy="12" r="1.8" fill="#c7c7c7"/><circle cy="18.2" cx="12" r="1.8" fill="#c7c7c7"/></svg>
<svg class="b" style="left:3158.4px;top:287px;overflow:visible;" width="30" height="30" viewBox="0 0 24 24"><path fill="none" stroke="#c7c7c7" stroke-width="2.48" stroke-linecap="butt" stroke-linejoin="miter" d="M4.6 4.6l14.8 14.8M19.4 4.6L4.6 19.4"/></svg>
<div class="b" style="left:2378px;top:324.5px;width:148px;height:4px;background:#a8c7fa;border-radius:4px 4px 0 0;"></div>
<div class="b" style="left:2247px;top:327.8px;width:947px;height:1.6px;background:#5e5e5e;"></div>
<div class="b" style="left:2247px;top:1050.2px;width:947px;height:48px;background:#282828;border-top:2px solid #555;border-bottom:2px solid #555;box-sizing:border-box;"></div>
<div class="b" style="left:2851.7px;top:1052px;width:312.8px;height:44.5px;background:#134875;"></div>
<div class="b" style="left:2248.5px;top:1052px;width:47px;height:44.5px;background:#282828;box-shadow:inset 0 0 0 1.5px #6a6a6a;"></div>
<svg class="b" style="left:2266.5px;top:1066.5px" width="11" height="15" viewBox="0 0 11 15"><path d="M10.5 0.5v14L0.5 7.5z" fill="#e3e3e3"/></svg>
<div class="t" style="left:2296px;top:1064.2px;font:24.5px/24.5px 'Liberation Sans',sans-serif;color:#a8c7fa;"><span style="color:#7cacf8">e</span></div>
<div class="t" style="left:2336.8px;top:1064.2px;font:24.5px/24.5px 'Liberation Sans',sans-serif;color:#a8c7fa;transform:scaleX(1.0784);transform-origin:0 0;"><span style="color:#7cacf8">div</span><span style="color:#a8c7fa">.affine-edgeless-surface-block-container</span></div>
<div class="t" style="left:2866.4px;top:1064.2px;font:24.5px/24.5px 'Liberation Sans',sans-serif;color:#a8c7fa;transform:scaleX(1.0301);transform-origin:0 0;"><span style="color:#a8c7fa">canvas</span><span style="color:#a8c7fa">.indexable-canvas</span></div>
<div class="b" style="left:2247px;top:1098px;width:947px;height:68px;background:#282828;"></div>
<div class="b" style="left:2252.4px;top:1110px;width:665.1px;height:43.5px;background:#3c3c3c;border-radius:22px;"></div>
<svg class="b" style="left:2270.4px;top:1118.2px;overflow:visible;" width="27.2" height="27.2" viewBox="0 0 24 24"><circle fill="none" stroke="#c7c7c7" stroke-width="2.474" stroke-linecap="butt" stroke-linejoin="miter" cx="9.8" cy="9.8" r="6.2"/><path fill="none" stroke="#c7c7c7" stroke-width="2.474" stroke-linecap="butt" stroke-linejoin="miter" d="M14.4 14.4l6.6 6.6"/></svg>
<div class="t" style="left:2312.4px;top:1120.4px;font:24.5px/24.5px 'Liberation Sans',sans-serif;color:#e3e3e3;transform:scaleX(0.9971);transform-origin:0 0;">canvas</div>
<svg class="b" style="left:2865px;top:1118.8px" width="26" height="26" viewBox="0 0 26 26"><circle cx="13" cy="13" r="13" fill="#dcdcdc"/><path d="M8 8l10 10M18 8L8 18" stroke="#2a2a2a" stroke-width="2.6"/></svg>
<svg class="b" style="left:2936.5px;top:1113.9px;overflow:visible;" width="35.1" height="35.1" viewBox="0 0 24 24"><path fill="none" stroke="#c7c7c7" stroke-width="1.912" stroke-linecap="round" stroke-linejoin="round" d="M5.6 15l6.4-6.4 6.4 6.4"/></svg>
<svg class="b" style="left:2992.3px;top:1114.9px;overflow:visible;" width="35.1" height="35.1" viewBox="0 0 24 24"><path fill="none" stroke="#c7c7c7" stroke-width="1.912" stroke-linecap="round" stroke-linejoin="round" d="M5.6 9l6.4 6.4L18.4 9"/></svg>
<div class="t" style="left:3056.9px;top:1120.4px;font:24.5px/24.5px 'Liberation Sans',sans-serif;color:#c7c7c7;transform:scaleX(1.0691);transform-origin:0 0;">2 of 13</div>
<svg class="b" style="left:3166.9px;top:1117px;overflow:visible;" width="30" height="30" viewBox="0 0 24 24"><path fill="none" stroke="#c7c7c7" stroke-width="2.08" stroke-linecap="butt" stroke-linejoin="miter" d="M4.6 4.6l14.8 14.8M19.4 4.6L4.6 19.4"/></svg>
<div class="b" style="left:2247px;top:1165px;width:947px;height:55.5px;background:#3c3c3c;border-top:1.5px solid #4d4d4d;border-bottom:1.5px solid #5a5a5a;box-sizing:border-box;"></div>
<div class="t" style="left:2268.3px;top:1182px;font:24.5px/24.5px 'Liberation Sans',sans-serif;color:#a8c7fa;transform:scaleX(1.0552);transform-origin:0 0;-webkit-text-stroke:0.75px;">Styles</div>
<div class="t" style="left:2380.5px;top:1182px;font:24.5px/24.5px 'Liberation Sans',sans-serif;color:#c7c7c7;transform:scaleX(1.0518);transform-origin:0 0;-webkit-text-stroke:0.75px;">Computed</div>
<div class="t" style="left:2543px;top:1182px;font:24.5px/24.5px 'Liberation Sans',sans-serif;color:#c7c7c7;transform:scaleX(1.0386);transform-origin:0 0;-webkit-text-stroke:0.75px;">Layout</div>
<div class="t" style="left:2660.8px;top:1182px;font:24.5px/24.5px 'Liberation Sans',sans-serif;color:#c7c7c7;transform:scaleX(1.0458);transform-origin:0 0;-webkit-text-stroke:0.75px;">Event Listeners</div>
<div class="t" style="left:2878.8px;top:1182px;font:24.5px/24.5px 'Liberation Sans',sans-serif;color:#c7c7c7;transform:scaleX(1.037);transform-origin:0 0;-webkit-text-stroke:0.75px;">DOM Breakpoints</div>
<svg class="b" style="left:3104.8px;top:1176.3px;overflow:visible;" width="33.3" height="33.3" viewBox="0 0 24 24"><path fill="none" stroke="#9e9e9e" stroke-width="2.16" stroke-linecap="butt" stroke-linejoin="miter" d="M4 5.6l6.4 6.4L4 18.4M12.4 5.6l6.4 6.4-6.4 6.4"/></svg>
<div class="b" style="left:2247px;top:1215.5px;width:113px;height:4.5px;background:#a8c7fa;border-radius:4px 4px 0 0;"></div>
<div class="b" style="left:2247px;top:1220.5px;width:765.5px;height:900px;background:#282828;"></div>
<div class="b" style="left:2257.4px;top:1226px;width:460.6px;height:40px;background:#3c3c3c;border-radius:20px;"></div>
<svg class="b" style="left:2277.4px;top:1233.6px;overflow:visible;" width="25.9" height="25.9" viewBox="0 0 24 24"><path fill="none" stroke="#c7c7c7" stroke-width="2.412" stroke-linecap="butt" stroke-linejoin="miter" stroke-linejoin="round" d="M3.8 4.5h16.4L13.6 12.5V20h-3.2v-7.5z"/></svg>
<div class="t" style="left:2314.7px;top:1235px;font:24.5px/24.5px 'Liberation Sans',sans-serif;color:#c7c7c7;transform:scaleX(1.0322);transform-origin:0 0;">Filter</div>
<div class="t" style="left:2730.5px;top:1236px;font:22.5px/22.5px 'Liberation Sans',sans-serif;color:#c7c7c7;transform:scaleX(0.9641);transform-origin:0 0;-webkit-text-stroke:0.4px;">:hov</div>
<div class="t" style="left:2789px;top:1236px;font:22.5px/22.5px 'Liberation Sans',sans-serif;color:#c7c7c7;transform:scaleX(1.1348);transform-origin:0 0;-webkit-text-stroke:0.4px;">.cls</div>
<svg class="b" style="left:2848.2px;top:1230.7px;overflow:visible;" width="30.7" height="30.7" viewBox="0 0 24 24"><path fill="none" stroke="#c7c7c7" stroke-width="2.191" stroke-linecap="round" stroke-linejoin="round" d="M12 3.6v16.8M3.6 12h16.8"/></svg>
<svg class="b" style="left:2875.5px;top:1254px" width="8" height="8" viewBox="0 0 8 8"><path d="M8 0v8H0z" fill="#c7c7c7"/></svg>
<svg class="b" style="left:2904px;top:1230px;overflow:visible;" width="32" height="32" viewBox="0 0 24 24"><path d="M4 2h16v9.8H4z" fill="#c7c7c7"/><path d="M6.4 2v3.2M9.6 2v4.4M12.8 2v3.2" stroke="#3c3c3c" stroke-width="1.3"/><path d="M4 8.3h16" stroke="#3c3c3c" stroke-width="1.5"/><path fill="none" stroke="#c7c7c7" stroke-width="1.95" stroke-linecap="butt" stroke-linejoin="miter" stroke-linejoin="round" d="M9.4 11.8v3h5.2v-3"/><path d="M10.3 14.8h3.4v6.2a1.7 1.7 0 01-3.4 0z" fill="#c7c7c7"/></svg>
<svg class="b" style="left:2957.2px;top:1229px;overflow:visible;" width="34" height="34" viewBox="0 0 24 24"><rect fill="none" stroke="#c7c7c7" stroke-width="1.837" stroke-linecap="butt" stroke-linejoin="miter" x="3" y="3.5" width="18" height="17"/><path fill="none" stroke="#c7c7c7" stroke-width="1.837" stroke-linecap="butt" stroke-linejoin="miter" d="M15.4 3.5v17"/><path d="M7 7.6L12.4 12 7 16.4z" fill="#c7c7c7"/></svg>
<div class="b" style="left:2247px;top:1272px;width:765.5px;height:1.6px;background:#4d4d4d;"></div>
<div class="t" style="left:2256.3px;top:1281.6px;font:22px/22px 'Liberation Mono',monospace;color:#9aa0a6;-webkit-text-stroke:0.3px;">element.style <span style="color:#e3e3e3">{</span></div>
<div class="t" style="left:2292.3px;top:1313.7px;font:22px/22px 'Liberation Mono',monospace;color:#e3e3e3;-webkit-text-stroke:0.3px;"><span style="color:#5cd5fb">z-index</span>: 1;</div>
<div class="t" style="left:2292.3px;top:1341.8px;font:22px/22px 'Liberation Mono',monospace;color:#e3e3e3;-webkit-text-stroke:0.3px;"><span style="color:#5cd5fb">width</span>: 526px;</div>
<div class="t" style="left:2292.3px;top:1369.9px;font:22px/22px 'Liberation Mono',monospace;color:#e3e3e3;-webkit-text-stroke:0.3px;"><span style="color:#5cd5fb">height</span>: 557.5px;</div>
<div class="t" style="left:2256.3px;top:1397px;font:22px/22px 'Liberation Mono',monospace;color:#e3e3e3;">}</div>
<div class="b" style="left:2247px;top:1427px;width:765.5px;height:1.6px;background:#4d4d4d;"></div>
<div class="t" style="left:2256.3px;top:1436.4px;font:22px/22px 'Liberation Mono',monospace;color:#e3e3e3;-webkit-text-stroke:0.3px;">.affine-edgeless-surface-block-container canvas</div>
<div class="t" style="left:2911.7px;top:1439.5px;font:22px/22px 'Liberation Mono',monospace;color:#a8c7fa;">&lt;style&gt;</div>
<div class="t" style="left:2256.3px;top:1460.8px;font:22px/22px 'Liberation Mono',monospace;color:#e3e3e3;">{</div>
<div class="t" style="left:2292.3px;top:1490px;font:22px/22px 'Liberation Mono',monospace;color:#e3e3e3;"><span style="color:#5cd5fb">left</span>: 0;</div>
<div class="b" style="left:3012.5px;top:1220.5px;width:181.5px;height:800px;background:#282828;overflow:hidden;border-left:1.6px solid #4d4d4d;box-sizing:border-box">
<div class="b" style="left:0px;top:22.5px;width:400px;height:2px;border-top:2px dotted #c9c9c9;"></div>
<div class="t" style="left:94.3px;top:32.2px;font:21.5px/21.5px 'Liberation Sans',sans-serif;color:#e3e3e3;">0</div>
<div class="b" style="left:-200px;top:59.5px;width:800px;height:37.5px;background:#ae8a5b;border-top:2px dashed #111;box-sizing:border-box;"></div>
<div class="b" style="left:-200px;top:96.8px;width:800px;height:38px;background:#e5c888;border-top:2.5px solid #111;box-sizing:border-box;"></div>
<div class="b" style="left:-200px;top:134.5px;width:800px;height:111.3px;background:#b9c884;border-top:2px dashed #111;border-bottom:2px dashed #111;box-sizing:border-box;"></div>
<div class="b" style="left:-200px;top:245.8px;width:800px;height:38px;background:#e5c888;"></div>
<div class="b" style="left:-200px;top:283.5px;width:800px;height:300px;background:#ae8a5b;border-top:2.5px solid #111;box-sizing:border-box;"></div>
<div class="b" style="left:77.1px;top:80.2px;width:12px;height:2px;background:#222;"></div>
<div class="b" style="left:77.1px;top:116.9px;width:12px;height:2px;background:#222;"></div>
<div class="b" style="left:77.1px;top:152px;width:12px;height:2px;background:#222;"></div>
<div class="b" style="left:77.1px;top:228px;width:12px;height:2px;background:#222;"></div>
<div class="b" style="left:77.1px;top:265.2px;width:12px;height:2px;background:#222;"></div>
<div class="b" style="left:3.3px;top:171.1px;width:159.5px;height:37.6px;background:#8cb5c0;box-shadow:inset 0 0 0 2.5px #111;"></div>
<div class="t" style="left:19.2px;top:179.1px;font:22.5px/22.5px 'Liberation Sans',sans-serif;color:#1f1f1f;transform:scaleX(0.9688);transform-origin:0 0;">526×557.500</div>
<div class="b" style="left:167.8px;top:190px;width:12px;height:2px;background:#222;"></div>
<div class="t" style="left:-26.3px;top:143.3px;font:21.5px/21.5px 'Liberation Sans',sans-serif;color:#2a2a2a;">padding</div>
<div class="b" style="left:1px;top:115.5px;width:4px;height:2px;background:#222;"></div>
</div>
<svg class="b" style="left:3181px;top:1067px" width="9" height="14" viewBox="0 0 9 14"><path d="M0 0v14l9-7z" fill="#8a8a8a"/></svg>
</div></div>
</body></html>
